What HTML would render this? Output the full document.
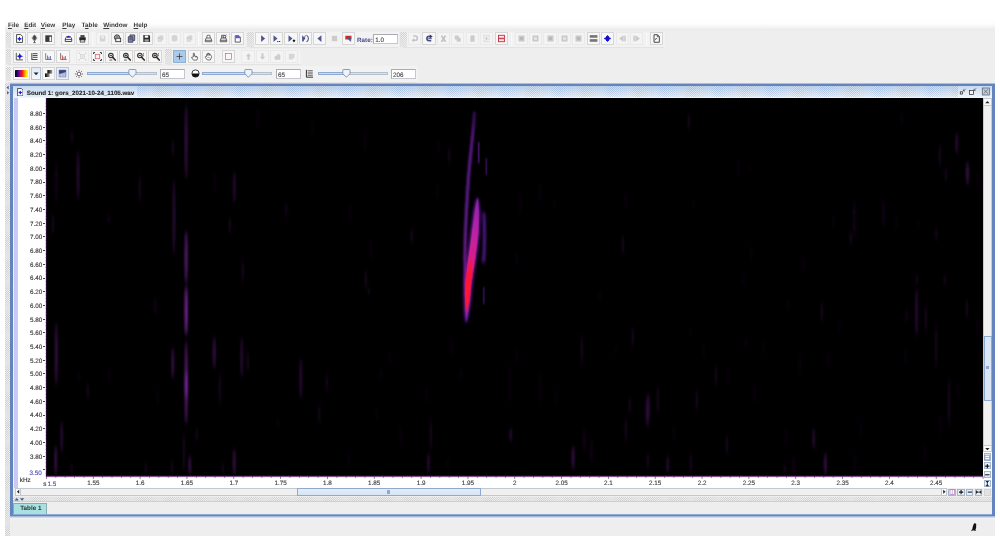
<!DOCTYPE html>
<html><head><meta charset="utf-8"><title>Raven</title>
<style>
html,body{margin:0;padding:0;background:#fff;}
body{width:1000px;height:541px;overflow:hidden;position:relative;font-family:"Liberation Sans",sans-serif;}
#r{position:absolute;left:0;top:0;width:1000px;height:541px;overflow:hidden;will-change:transform;}
#r div,#r span,#r svg{position:absolute;box-sizing:border-box;}
#r span{white-space:nowrap;text-rendering:geometricPrecision;-webkit-text-stroke:0.12px currentColor;}
#r span.bd0{-webkit-text-stroke:0;}
u{text-decoration-thickness:0.5px;text-underline-offset:0.6px;}
.b{background:#f7f7f7;border:0.7px solid #d6d6d6;box-shadow:0 0 0.5px #e2e2e2;}
.bd{background:#f4f4f4;border:0.7px solid #eaeaea;}
.ic{filter:blur(0.28px);}
.tf{background:#fff;border:1px solid #c4c7cc;border-top-color:#a9acb2;border-left-color:#a9acb2;}
</style></head><body><div id="r">

<div style="left:4.60px;top:19.00px;width:990.00px;height:516.60px;background:#eeeeee;"></div>
<div style="left:4.60px;top:19.00px;width:990.00px;height:12.20px;background:linear-gradient(#ffffff 0%,#fdfdfd 40%,#e9e9e9 100%);"></div>
<span class=bd0 style="left:8.00px;top:22.09px;font-size:6.35px;line-height:7.62px;color:#3a3a3a;font-weight:bold;"><u>F</u>ile</span>
<span class=bd0 style="left:24.20px;top:22.09px;font-size:6.35px;line-height:7.62px;color:#3a3a3a;font-weight:bold;"><u>E</u>dit</span>
<span class=bd0 style="left:40.80px;top:22.09px;font-size:6.35px;line-height:7.62px;color:#3a3a3a;font-weight:bold;"><u>V</u>iew</span>
<span class=bd0 style="left:62.30px;top:22.09px;font-size:6.35px;line-height:7.62px;color:#3a3a3a;font-weight:bold;"><u>P</u>lay</span>
<span class=bd0 style="left:81.60px;top:22.09px;font-size:6.35px;line-height:7.62px;color:#3a3a3a;font-weight:bold;">T<u>a</u>ble</span>
<span class=bd0 style="left:103.30px;top:22.09px;font-size:6.35px;line-height:7.62px;color:#3a3a3a;font-weight:bold;"><u>W</u>indow</span>
<span class=bd0 style="left:133.60px;top:22.09px;font-size:6.35px;line-height:7.62px;color:#3a3a3a;font-weight:bold;"><u>H</u>elp</span>
<div style="left:4.60px;top:31.50px;width:241.80px;height:15.30px;background:#f2f2f2;box-shadow:0 0.5px 0.8px #e3e3e3;"></div>
<div style="left:246.80px;top:31.50px;width:152.70px;height:15.30px;background:#f2f2f2;box-shadow:0 0.5px 0.8px #e3e3e3;"></div>
<div style="left:400.00px;top:31.50px;width:265.00px;height:15.30px;background:#f2f2f2;box-shadow:0 0.5px 0.8px #e3e3e3;"></div>
<div style="left:4.60px;top:48.60px;width:158.90px;height:15.60px;background:#f2f2f2;box-shadow:0 0.5px 0.8px #e3e3e3;"></div>
<div style="left:164.00px;top:48.60px;width:136.50px;height:15.60px;background:#f2f2f2;box-shadow:0 0.5px 0.8px #e3e3e3;"></div>
<div style="left:4.60px;top:66.30px;width:413.90px;height:15.30px;background:#f2f2f2;box-shadow:0 0.5px 0.8px #e3e3e3;"></div>
<div style="left:5.70px;top:32.20px;width:5.50px;height:14.40px;background-color:#f0f0f0;background-image:linear-gradient(45deg,rgba(0,0,0,0.13) 25%,transparent 25%,transparent 75%,rgba(0,0,0,0.13) 75%),linear-gradient(45deg,rgba(0,0,0,0.13) 25%,transparent 25%,transparent 75%,rgba(0,0,0,0.13) 75%);background-size:2.08px 2.08px;background-position:0 0,1.04px 1.04px;"></div>
<div style="left:247.00px;top:32.20px;width:7.40px;height:14.40px;background-color:#f0f0f0;background-image:linear-gradient(45deg,rgba(0,0,0,0.13) 25%,transparent 25%,transparent 75%,rgba(0,0,0,0.13) 75%),linear-gradient(45deg,rgba(0,0,0,0.13) 25%,transparent 25%,transparent 75%,rgba(0,0,0,0.13) 75%);background-size:2.08px 2.08px;background-position:0 0,1.04px 1.04px;"></div>
<div style="left:400.20px;top:32.20px;width:6.80px;height:14.40px;background-color:#f0f0f0;background-image:linear-gradient(45deg,rgba(0,0,0,0.13) 25%,transparent 25%,transparent 75%,rgba(0,0,0,0.13) 75%),linear-gradient(45deg,rgba(0,0,0,0.13) 25%,transparent 25%,transparent 75%,rgba(0,0,0,0.13) 75%);background-size:2.08px 2.08px;background-position:0 0,1.04px 1.04px;"></div>
<div style="left:5.70px;top:49.40px;width:5.50px;height:14.60px;background-color:#f0f0f0;background-image:linear-gradient(45deg,rgba(0,0,0,0.13) 25%,transparent 25%,transparent 75%,rgba(0,0,0,0.13) 75%),linear-gradient(45deg,rgba(0,0,0,0.13) 25%,transparent 25%,transparent 75%,rgba(0,0,0,0.13) 75%);background-size:2.08px 2.08px;background-position:0 0,1.04px 1.04px;"></div>
<div style="left:164.60px;top:49.40px;width:7.00px;height:14.60px;background-color:#f0f0f0;background-image:linear-gradient(45deg,rgba(0,0,0,0.13) 25%,transparent 25%,transparent 75%,rgba(0,0,0,0.13) 75%),linear-gradient(45deg,rgba(0,0,0,0.13) 25%,transparent 25%,transparent 75%,rgba(0,0,0,0.13) 75%);background-size:2.08px 2.08px;background-position:0 0,1.04px 1.04px;"></div>
<div style="left:5.70px;top:67.00px;width:5.50px;height:14.20px;background-color:#f0f0f0;background-image:linear-gradient(45deg,rgba(0,0,0,0.13) 25%,transparent 25%,transparent 75%,rgba(0,0,0,0.13) 75%),linear-gradient(45deg,rgba(0,0,0,0.13) 25%,transparent 25%,transparent 75%,rgba(0,0,0,0.13) 75%);background-size:2.08px 2.08px;background-position:0 0,1.04px 1.04px;"></div>
<div class="b" style="left:13.00px;top:32.40px;width:13.20px;height:13.00px;"></div>
<svg class="ic" style="left:13.10px;top:32.40px;width:13px;height:13px" viewBox="-0.6 -0.6 14.2 14.2"><path d="M3.3 2.2 H7.8 L9.8 4.2 V10.8 H3.3Z" fill="#fff" stroke="#2b2b2b" stroke-width="0.9"/><path d="M6.5 4.2 L7.4 6 L9.2 6.9 L7.4 7.8 L6.5 9.6 L5.6 7.8 L3.8 6.9 L5.6 6Z" fill="#1a1ad8"/></svg>
<div class="b" style="left:27.45px;top:32.40px;width:13.20px;height:13.00px;"></div>
<svg class="ic" style="left:27.55px;top:32.40px;width:13px;height:13px" viewBox="-0.6 -0.6 14.2 14.2"><path d="M6.5 2 L9.8 6 L6.5 10 L3.2 6Z" fill="#8a8a8a"/><ellipse cx="6.5" cy="5.6" rx="1.5" ry="2.6" fill="#444"/><path d="M6.5 9 V11 M5.2 11 H7.8" stroke="#444" stroke-width="0.9"/></svg>
<div class="b" style="left:41.90px;top:32.40px;width:13.20px;height:13.00px;"></div>
<svg class="ic" style="left:42.00px;top:32.40px;width:13px;height:13px" viewBox="-0.6 -0.6 14.2 14.2"><rect x="3" y="3" width="7.2" height="7.2" fill="#3a3a3a"/><rect x="7.6" y="4.6" width="1.9" height="5" fill="#fff"/></svg>
<div class="b" style="left:61.40px;top:32.40px;width:13.20px;height:13.00px;"></div>
<svg class="ic" style="left:61.50px;top:32.40px;width:13px;height:13px" viewBox="-0.6 -0.6 14.2 14.2"><path d="M3 7 L4.4 4.4 H8.6 L10 7 V9.8 H3Z" fill="#eee" stroke="#2b2b2b" stroke-width="0.9"/><path d="M3 7.6 H10" stroke="#2b2b2b" stroke-width="0.8"/><path d="M6.5 3.2 L8.3 5.8 H4.7Z" fill="#1a1ad8"/></svg>
<div class="b" style="left:75.90px;top:32.40px;width:13.20px;height:13.00px;"></div>
<svg class="ic" style="left:76.00px;top:32.40px;width:13px;height:13px" viewBox="-0.6 -0.6 14.2 14.2"><rect x="4.2" y="2.8" width="4.6" height="2.6" fill="#444"/><rect x="3" y="5.2" width="7" height="3.2" fill="#222"/><rect x="4" y="8" width="5" height="2.4" fill="#ddd" stroke="#222" stroke-width="0.7"/></svg>
<div class="bd" style="left:96.00px;top:32.40px;width:13.20px;height:13.00px;"></div>
<svg class="ic" style="left:96.10px;top:32.40px;width:13px;height:13px" viewBox="-0.6 -0.6 14.2 14.2"><rect x="3.6" y="3.2" width="6" height="6.6" rx="1" fill="#d4d4d4"/><rect x="5" y="3.8" width="3.2" height="2.6" fill="#ececec"/></svg>
<div class="b" style="left:110.50px;top:32.40px;width:13.20px;height:13.00px;"></div>
<svg class="ic" style="left:110.60px;top:32.40px;width:13px;height:13px" viewBox="-0.6 -0.6 14.2 14.2"><circle cx="6" cy="5.4" r="2.9" fill="#ccc" stroke="#2b2b2b" stroke-width="1"/><rect x="4.6" y="6.2" width="5.4" height="3.8" fill="#eee" stroke="#2b2b2b" stroke-width="0.9"/><path d="M4.4 4.8 H7.6" stroke="#2b2b2b" stroke-width="0.9"/></svg>
<div class="b" style="left:124.90px;top:32.40px;width:13.20px;height:13.00px;"></div>
<svg class="ic" style="left:125.00px;top:32.40px;width:13px;height:13px" viewBox="-0.6 -0.6 14.2 14.2"><path d="M4.8 2.6 H10 V8.6 H4.8Z" fill="#9a9ad8" stroke="#2b2b2b" stroke-width="0.8"/><path d="M3 4.6 H8 V10.6 H3Z" fill="#8484cc" stroke="#2b2b2b" stroke-width="0.8"/><path d="M4 6.2 H7 M4 7.8 H7" stroke="#334" stroke-width="0.6"/></svg>
<div class="b" style="left:139.40px;top:32.40px;width:13.20px;height:13.00px;"></div>
<svg class="ic" style="left:139.50px;top:32.40px;width:13px;height:13px" viewBox="-0.6 -0.6 14.2 14.2"><path d="M3 2.8 H9.4 L10.4 3.8 V10.4 H3Z" fill="#2e2e2e"/><rect x="4.6" y="3.2" width="3.8" height="2.4" fill="#fff"/><rect x="4.4" y="7.4" width="4.6" height="2.6" fill="#fff" opacity=".55"/></svg>
<div class="bd" style="left:153.90px;top:32.40px;width:13.20px;height:13.00px;"></div>
<svg class="ic" style="left:154.00px;top:32.40px;width:13px;height:13px" viewBox="-0.6 -0.6 14.2 14.2"><path d="M5.2 3 H9.6 V8.4 H5.2Z" fill="#d6d6d6"/><path d="M3.4 4.6 H7.8 V10 H3.4Z" fill="#cfcfcf"/><rect x="4.4" y="7" width="2.2" height="2" fill="#e4e4e4"/></svg>
<div class="bd" style="left:168.20px;top:32.40px;width:13.20px;height:13.00px;"></div>
<svg class="ic" style="left:168.30px;top:32.40px;width:13px;height:13px" viewBox="-0.6 -0.6 14.2 14.2"><path d="M3.6 3.4 L6.8 2.8 L9.6 3.8 V8.8 L6.6 10 L3.6 9Z" fill="#d2d2d2"/><path d="M6.7 4.6 V9.8" stroke="#e2e2e2" stroke-width="0.6"/></svg>
<div class="bd" style="left:182.60px;top:32.40px;width:13.20px;height:13.00px;"></div>
<svg class="ic" style="left:182.70px;top:32.40px;width:13px;height:13px" viewBox="-0.6 -0.6 14.2 14.2"><path d="M5.2 3 H9.6 V8.4 H5.2Z" fill="#d6d6d6"/><path d="M3.4 4.6 H7.8 V10 H3.4Z" fill="#cfcfcf"/><rect x="4.4" y="7" width="2.2" height="2" fill="#e4e4e4"/></svg>
<div class="b" style="left:201.90px;top:32.40px;width:13.20px;height:13.00px;"></div>
<svg class="ic" style="left:202.00px;top:32.40px;width:13px;height:13px" viewBox="-0.6 -0.6 14.2 14.2"><path d="M4.6 5.8 L5 3 H8 L8.4 5.8" fill="#fff" stroke="#2b2b2b" stroke-width="0.7"/><path d="M3 8.6 L4 5.9 H9 L10 8.6 V10 H3Z" fill="#f4f4f4" stroke="#2b2b2b" stroke-width="0.75"/><path d="M3 8.5 H10" stroke="#2b2b2b" stroke-width="0.7"/><path d="M3.4 9.6 H9.6" stroke="#8a8a50" stroke-width="0.5"/></svg>
<div class="b" style="left:216.40px;top:32.40px;width:13.20px;height:13.00px;"></div>
<svg class="ic" style="left:216.50px;top:32.40px;width:13px;height:13px" viewBox="-0.6 -0.6 14.2 14.2"><path d="M4.4 5.8 V3 H7.6 V5.8" fill="#ddd" stroke="#2b2b2b" stroke-width="0.7"/><circle cx="7.6" cy="4.6" r="1.5" fill="#eee" stroke="#2b2b2b" stroke-width="0.75"/><path d="M8.4 3.6 L9.8 2.4" stroke="#2b2b2b" stroke-width="0.7"/><path d="M3 8.6 L4 5.9 H9 L10 8.6 V10 H3Z" fill="#e4e4e4" stroke="#2b2b2b" stroke-width="0.75"/><path d="M3 8.5 H10" stroke="#2b2b2b" stroke-width="0.7"/></svg>
<div class="b" style="left:230.90px;top:32.40px;width:13.20px;height:13.00px;"></div>
<svg class="ic" style="left:231.00px;top:32.40px;width:13px;height:13px" viewBox="-0.6 -0.6 14.2 14.2"><path d="M4 3.4 H8 L9.6 5 V10.4 H4Z" fill="#fff" stroke="#2b2b2b" stroke-width="0.8"/><path d="M4.4 3.8 H7.8 L9.2 5.2 V6.2 H4.4Z" fill="#5a5ac8"/></svg>
<div class="b" style="left:255.40px;top:32.40px;width:13.20px;height:13.00px;"></div>
<svg class="ic" style="left:255.50px;top:32.40px;width:13px;height:13px" viewBox="-0.6 -0.6 14.2 14.2"><path d="M5 2.9 L9.4 6.6 L5 10.3Z" fill="#50548f"/></svg>
<div class="b" style="left:269.90px;top:32.40px;width:13.20px;height:13.00px;"></div>
<svg class="ic" style="left:270.00px;top:32.40px;width:13px;height:13px" viewBox="-0.6 -0.6 14.2 14.2"><path d="M3.2 2.9 L7.6 6.6 L3.2 10.3Z" fill="#50548f"/><path d="M7.2 9.8 H8.6 M9.2 9.8 H10.6" stroke="#222" stroke-width="1"/></svg>
<div class="b" style="left:284.40px;top:32.40px;width:13.20px;height:13.00px;"></div>
<svg class="ic" style="left:284.50px;top:32.40px;width:13px;height:13px" viewBox="-0.6 -0.6 14.2 14.2"><path d="M3.2 2.9 L7.6 6.6 L3.2 10.3Z" fill="#50548f"/><path d="M9.2 7.3 L10.8 8.9 L9.2 10.5 L7.6 8.9Z" fill="#111"/></svg>
<div class="b" style="left:298.80px;top:32.40px;width:13.20px;height:13.00px;"></div>
<svg class="ic" style="left:298.90px;top:32.40px;width:13px;height:13px" viewBox="-0.6 -0.6 14.2 14.2"><path d="M2.8 3 L6.4 6.5 L2.8 10Z" fill="#50548f"/><path d="M6.4 3 L3.8 10" stroke="#50548f" stroke-width="0.9"/><path d="M7.6 2.8 C10.4 4.6 10.4 8.4 7.6 10.2" fill="none" stroke="#50548f" stroke-width="1.2"/></svg>
<div class="b" style="left:313.30px;top:32.40px;width:13.20px;height:13.00px;"></div>
<svg class="ic" style="left:313.40px;top:32.40px;width:13px;height:13px" viewBox="-0.6 -0.6 14.2 14.2"><path d="M8.6 2.9 L4.2 6.6 L8.6 10.3Z" fill="#50548f"/></svg>
<svg class="ic" style="left:328.10px;top:32.40px;width:13px;height:13px" viewBox="-0.6 -0.6 14.2 14.2"><rect x="3.6" y="3.6" width="5.8" height="5.8" fill="#cbcbcb"/></svg>
<div class="b" style="left:342.20px;top:32.40px;width:13.20px;height:13.00px;"></div>
<svg class="ic" style="left:342.30px;top:32.40px;width:13px;height:13px" viewBox="-0.6 -0.6 14.2 14.2"><path d="M3 3.6 H9.8 V7.6 H8.2 L8.6 10 L6.4 7.6 H3Z" fill="#c83030"/><rect x="5.4" y="4.8" width="3.6" height="2.4" fill="#50548f"/><path d="M8.6 7 L9 9.8" stroke="#50548f" stroke-width="0.9"/></svg>
<div class="bd" style="left:408.00px;top:32.40px;width:13.20px;height:13.00px;"></div>
<svg class="ic" style="left:408.10px;top:32.40px;width:13px;height:13px" viewBox="-0.6 -0.6 14.2 14.2"><path d="M5 3.8 H7.2 C10.4 3.8 10.4 8.4 7.2 8.4 H6" fill="none" stroke="#c4c4c4" stroke-width="1.7"/><path d="M6.2 6.2 L3.2 8.4 L6.2 10.6Z" fill="#c4c4c4"/></svg>
<div class="b" style="left:422.40px;top:32.40px;width:13.20px;height:13.00px;"></div>
<svg class="ic" style="left:422.50px;top:32.40px;width:13px;height:13px" viewBox="-0.6 -0.6 14.2 14.2"><path d="M8.4 9 H6.2 C2.8 9 2.8 4.2 6.2 4.2 H7" fill="none" stroke="#4a4e80" stroke-width="1.8"/><path d="M6.8 2.2 L10 4.3 L6.8 6.4Z" fill="#33365e"/><path d="M5.2 6.7 H9" stroke="#4a4e80" stroke-width="1.1"/></svg>
<div class="bd" style="left:436.80px;top:32.40px;width:13.20px;height:13.00px;"></div>
<svg class="ic" style="left:436.90px;top:32.40px;width:13px;height:13px" viewBox="-0.6 -0.6 14.2 14.2"><path d="M4.7 4 L8.3 9.4 M8.3 4 L4.7 9.4" stroke="#c2c2c2" stroke-width="1.9" stroke-linecap="round"/></svg>
<div class="bd" style="left:451.20px;top:32.40px;width:13.20px;height:13.00px;"></div>
<svg class="ic" style="left:451.30px;top:32.40px;width:13px;height:13px" viewBox="-0.6 -0.6 14.2 14.2"><path d="M3.6 3.2 H7 L8 4.2 V7.6 H3.6Z M5.6 5.4 H9 L10 6.4 V10 H5.6Z" fill="#cbcbcb"/></svg>
<div class="bd" style="left:465.60px;top:32.40px;width:13.20px;height:13.00px;"></div>
<svg class="ic" style="left:465.70px;top:32.40px;width:13px;height:13px" viewBox="-0.6 -0.6 14.2 14.2"><path d="M4.2 4.4 C4.2 2.6 8.8 2.6 8.8 4.4 V10 H4.2Z" fill="#cbcbcb"/></svg>
<div class="bd" style="left:480.00px;top:32.40px;width:13.20px;height:13.00px;"></div>
<svg class="ic" style="left:480.10px;top:32.40px;width:13px;height:13px" viewBox="-0.6 -0.6 14.2 14.2"><rect x="3.6" y="3" width="5.8" height="7" fill="none" stroke="#cbcbcb" stroke-width="1" stroke-dasharray="1.4 1"/><rect x="5.6" y="4.6" width="1.8" height="3.8" fill="#cbcbcb"/></svg>
<div class="b" style="left:494.50px;top:32.40px;width:13.20px;height:13.00px;"></div>
<svg class="ic" style="left:494.60px;top:32.40px;width:13px;height:13px" viewBox="-0.6 -0.6 14.2 14.2"><rect x="3.2" y="3" width="6.6" height="3.2" fill="#fbe4e6" stroke="#c42838" stroke-width="0.95"/><rect x="3.2" y="6.8" width="6.6" height="3.2" fill="#fbe4e6" stroke="#c42838" stroke-width="0.95"/></svg>
<div class="bd" style="left:514.50px;top:32.40px;width:13.20px;height:13.00px;"></div>
<svg class="ic" style="left:514.60px;top:32.40px;width:13px;height:13px" viewBox="-0.6 -0.6 14.2 14.2"><rect x="3.2" y="3.2" width="6.6" height="6.6" fill="#c9c9c9"/><rect x="5.2" y="5.2" width="2.6" height="2.6" fill="#b0b0b0"/></svg>
<div class="bd" style="left:529.00px;top:32.40px;width:13.20px;height:13.00px;"></div>
<svg class="ic" style="left:529.10px;top:32.40px;width:13px;height:13px" viewBox="-0.6 -0.6 14.2 14.2"><rect x="3.2" y="3.2" width="6.6" height="6.6" fill="#c9c9c9"/><rect x="5" y="5" width="3" height="3" fill="#e6e6e6"/></svg>
<div class="bd" style="left:543.40px;top:32.40px;width:13.20px;height:13.00px;"></div>
<svg class="ic" style="left:543.50px;top:32.40px;width:13px;height:13px" viewBox="-0.6 -0.6 14.2 14.2"><rect x="3.2" y="3.2" width="6.6" height="6.6" fill="#c9c9c9"/><rect x="5.2" y="5.2" width="2.6" height="2.6" fill="#b0b0b0"/></svg>
<div class="bd" style="left:557.80px;top:32.40px;width:13.20px;height:13.00px;"></div>
<svg class="ic" style="left:557.90px;top:32.40px;width:13px;height:13px" viewBox="-0.6 -0.6 14.2 14.2"><rect x="3.2" y="3.2" width="6.6" height="6.6" fill="#c9c9c9"/><rect x="5" y="5" width="3" height="3" fill="#e6e6e6"/></svg>
<div class="bd" style="left:572.20px;top:32.40px;width:13.20px;height:13.00px;"></div>
<svg class="ic" style="left:572.30px;top:32.40px;width:13px;height:13px" viewBox="-0.6 -0.6 14.2 14.2"><rect x="3.2" y="3.2" width="6.6" height="6.6" fill="#c9c9c9"/><rect x="5.2" y="5.2" width="2.6" height="2.6" fill="#b0b0b0"/></svg>
<div class="b" style="left:586.60px;top:32.40px;width:13.20px;height:13.00px;"></div>
<svg class="ic" style="left:586.70px;top:32.40px;width:13px;height:13px" viewBox="-0.6 -0.6 14.2 14.2"><rect x="2.4" y="2.8" width="8.4" height="2.9" fill="#777"/><rect x="2.4" y="7.2" width="8.4" height="2.9" fill="#777"/></svg>
<div class="b" style="left:601.00px;top:32.40px;width:13.20px;height:13.00px;"></div>
<svg class="ic" style="left:601.10px;top:32.40px;width:13px;height:13px" viewBox="-0.6 -0.6 14.2 14.2"><path d="M6.5 2.6 L8 4.6 L8 5.4 L10.6 6.5 L8 7.6 L8 8.4 L6.5 10.4 L5 8.4 L5 7.6 L2.4 6.5 L5 5.4 L5 4.6Z" fill="#1010cc"/><rect x="3.4" y="5.5" width="6.2" height="2" fill="#1010cc"/><rect x="5" y="3.8" width="3" height="5.4" fill="#1010cc"/></svg>
<div class="bd" style="left:615.50px;top:32.40px;width:13.20px;height:13.00px;"></div>
<svg class="ic" style="left:615.60px;top:32.40px;width:13px;height:13px" viewBox="-0.6 -0.6 14.2 14.2"><path d="M7.4 3 V10 L2.8 6.5Z" fill="#cbcbcb"/><rect x="7.4" y="3.4" width="2.8" height="6.2" fill="#d2d2d2"/></svg>
<div class="bd" style="left:630.00px;top:32.40px;width:13.20px;height:13.00px;"></div>
<svg class="ic" style="left:630.10px;top:32.40px;width:13px;height:13px" viewBox="-0.6 -0.6 14.2 14.2"><path d="M5.6 3 V10 L10.2 6.5Z" fill="#cbcbcb"/><rect x="2.8" y="3.4" width="2.8" height="6.2" fill="#d2d2d2"/></svg>
<div class="b" style="left:649.80px;top:32.40px;width:13.20px;height:13.00px;"></div>
<svg class="ic" style="left:649.90px;top:32.40px;width:13px;height:13px" viewBox="-0.6 -0.6 14.2 14.2"><path d="M3.8 2.4 H7.6 L9.6 4.4 V10.6 H3.8Z" fill="#fff" stroke="#2b2b2b" stroke-width="0.95"/><path d="M7.4 2.6 V4.6 H9.4" fill="none" stroke="#2b2b2b" stroke-width="0.8"/><path d="M5 8.4 L6.2 6 L7.2 7.4" fill="none" stroke="#2b2b2b" stroke-width="0.7"/></svg>
<div style="left:56.60px;top:32.60px;width:2.80px;height:13.20px;background:linear-gradient(90deg,#e8e8e8,#fafafa 50%,#f0f0f0);"></div>
<div style="left:91.20px;top:32.60px;width:2.80px;height:13.20px;background:linear-gradient(90deg,#e8e8e8,#fafafa 50%,#f0f0f0);"></div>
<div style="left:197.20px;top:32.60px;width:2.80px;height:13.20px;background:linear-gradient(90deg,#e8e8e8,#fafafa 50%,#f0f0f0);"></div>
<div style="left:510.20px;top:32.60px;width:2.80px;height:13.20px;background:linear-gradient(90deg,#e8e8e8,#fafafa 50%,#f0f0f0);"></div>
<div style="left:645.40px;top:32.60px;width:2.80px;height:13.20px;background:linear-gradient(90deg,#e8e8e8,#fafafa 50%,#f0f0f0);"></div>
<span class=bd0 style="left:357.00px;top:36.62px;font-size:6.3px;line-height:7.56px;color:#4a4e8e;font-weight:bold;">Rate:</span>
<div class="tf" style="left:373.4px;top:34.2px;width:24.2px;height:9.6px"></div>
<span style="left:375.20px;top:36.62px;font-size:6.3px;line-height:7.56px;color:#444;">1.0</span>
<div class="b" style="left:13.00px;top:49.60px;width:13.20px;height:13.40px;"></div>
<svg class="ic" style="left:13.10px;top:49.80px;width:13px;height:13px" viewBox="-0.6 -0.6 14.2 14.2"><path d="M3 2.6 V10.2 H10.2" fill="none" stroke="#333" stroke-width="0.9"/><path d="M6.8 2.6 L7.9 5.2 L10.5 6.3 L7.9 7.4 L6.8 10 L5.7 7.4 L3.6 6.3 L5.7 5.2Z" fill="#1a1ad8"/></svg>
<div class="b" style="left:27.45px;top:49.60px;width:13.20px;height:13.40px;"></div>
<svg class="ic" style="left:27.55px;top:49.80px;width:13px;height:13px" viewBox="-0.6 -0.6 14.2 14.2"><path d="M3.6 2.8 V10.2" stroke="#333" stroke-width="1"/><path d="M4.6 3.4 H9.8 M4.6 5.4 H9.8 M4.6 7.4 H9.8 M3.6 9.8 H9.8" stroke="#333" stroke-width="0.95"/></svg>
<div class="b" style="left:41.90px;top:49.60px;width:13.20px;height:13.40px;"></div>
<svg class="ic" style="left:42.00px;top:49.80px;width:13px;height:13px" viewBox="-0.6 -0.6 14.2 14.2"><path d="M3.4 2.8 V9.8 H10 M5.4 9.8 V5.4 M7 9.8 V6.8 M8.6 9.8 V6" fill="none" stroke="#5a64a8" stroke-width="0.9"/></svg>
<div class="b" style="left:56.40px;top:49.60px;width:13.20px;height:13.40px;"></div>
<svg class="ic" style="left:56.50px;top:49.80px;width:13px;height:13px" viewBox="-0.6 -0.6 14.2 14.2"><path d="M3.4 2.8 V9.8" fill="none" stroke="#555" stroke-width="0.9"/><path d="M3.4 9.8 H10 M5.4 9.8 V5.4 M7 9.8 V6.8 M8.6 9.8 V6" fill="none" stroke="#c8423a" stroke-width="0.9"/></svg>
<div class="bd" style="left:76.00px;top:49.60px;width:13.20px;height:13.40px;"></div>
<svg class="ic" style="left:76.10px;top:49.80px;width:13px;height:13px" viewBox="-0.6 -0.6 14.2 14.2"><rect x="4.3" y="4.3" width="4.4" height="4.4" fill="#e6e6e6" stroke="#d2d2d2" stroke-width="0.7"/><path d="M2.6 3.6 V2.6 H3.6 M9.4 2.6 H10.4 V3.6 M2.6 9.4 V10.4 H3.6 M9.4 10.4 H10.4 V9.4" fill="none" stroke="#c8c8c8" stroke-width="0.9"/></svg>
<div class="b" style="left:90.50px;top:49.60px;width:13.20px;height:13.40px;"></div>
<svg class="ic" style="left:90.60px;top:49.80px;width:13px;height:13px" viewBox="-0.6 -0.6 14.2 14.2"><rect x="4.1" y="4.1" width="4.8" height="4.8" fill="#fdf0f0" stroke="#dc5a66" stroke-width="0.8"/><path d="M2.2 3.8 V2.2 H3.8 M9.2 2.2 H10.8 V3.8 M2.2 9.2 V10.8 H3.8 M9.2 10.8 H10.8 V9.2" fill="none" stroke="#222" stroke-width="1"/></svg>
<div class="b" style="left:104.90px;top:49.60px;width:13.20px;height:13.40px;"></div>
<svg class="ic" style="left:105.00px;top:49.80px;width:13px;height:13px" viewBox="-0.6 -0.6 14.2 14.2"><circle cx="5.8" cy="5.4" r="2.5" fill="#ddd" stroke="#2b2b2b" stroke-width="1.1"/><path d="M7.6 7.2 L10.6 10.4" stroke="#3a2a20" stroke-width="1.7" stroke-linecap="round"/><path d="M4.6 5.4 H7" stroke="#2b2b2b" stroke-width="0.9"/><path d="M4.2 10.4 H7.4" stroke="#2b2b2b" stroke-width="0.8"/></svg>
<div class="b" style="left:119.40px;top:49.60px;width:13.20px;height:13.40px;"></div>
<svg class="ic" style="left:119.50px;top:49.80px;width:13px;height:13px" viewBox="-0.6 -0.6 14.2 14.2"><circle cx="5.8" cy="5.4" r="2.5" fill="#ddd" stroke="#2b2b2b" stroke-width="1.1"/><path d="M7.6 7.2 L10.6 10.4" stroke="#3a2a20" stroke-width="1.7" stroke-linecap="round"/><path d="M4.6 5.4 H7" stroke="#2b2b2b" stroke-width="0.9"/><path d="M3.8 10.4 H7" stroke="#2b2b2b" stroke-width="0.8"/><path d="M5.8 4.2 V6.6" stroke="#2b2b2b" stroke-width="0.9"/></svg>
<div class="b" style="left:133.90px;top:49.60px;width:13.20px;height:13.40px;"></div>
<svg class="ic" style="left:134.00px;top:49.80px;width:13px;height:13px" viewBox="-0.6 -0.6 14.2 14.2"><circle cx="5.8" cy="5.4" r="2.5" fill="#ddd" stroke="#2b2b2b" stroke-width="1.1"/><path d="M7.6 7.2 L10.6 10.4" stroke="#3a2a20" stroke-width="1.7" stroke-linecap="round"/><path d="M4.6 5.4 H7" stroke="#2b2b2b" stroke-width="0.9"/><path d="M9.8 3 V6.4" stroke="#2b2b2b" stroke-width="0.9" stroke-dasharray="1 .6"/></svg>
<div class="b" style="left:148.40px;top:49.60px;width:13.20px;height:13.40px;"></div>
<svg class="ic" style="left:148.50px;top:49.80px;width:13px;height:13px" viewBox="-0.6 -0.6 14.2 14.2"><circle cx="5.8" cy="5.4" r="2.5" fill="#ddd" stroke="#2b2b2b" stroke-width="1.1"/><path d="M7.6 7.2 L10.6 10.4" stroke="#3a2a20" stroke-width="1.7" stroke-linecap="round"/><path d="M4.6 5.4 H7" stroke="#2b2b2b" stroke-width="0.9"/><path d="M9.8 3 V6.4" stroke="#2b2b2b" stroke-width="0.9" stroke-dasharray="1 .6"/><path d="M5.8 4.2 V6.6" stroke="#2b2b2b" stroke-width="0.9"/></svg>
<div class="b" style="left:173.00px;top:49.60px;width:13.20px;height:13.40px;background:#a9cbe9;border-color:#8fb0d0;"></div>
<svg class="ic" style="left:173.10px;top:49.80px;width:13px;height:13px" viewBox="-0.6 -0.6 14.2 14.2"><path d="M6.5 3.2 V9.8 M3.2 6.5 H9.8" stroke="#333" stroke-width="0.8"/></svg>
<div class="b" style="left:187.60px;top:49.60px;width:13.20px;height:13.40px;"></div>
<svg class="ic" style="left:187.70px;top:49.80px;width:13px;height:13px" viewBox="-0.6 -0.6 14.2 14.2"><path d="M5.2 7.2 V3.4 C5.2 2.6 6.4 2.6 6.4 3.4 V6 L9.4 6.6 C10 6.8 10 7.4 9.8 8.2 L9.2 10.4 H5.4 L3.4 7.8 C3 7.2 3.8 6.6 4.4 7.2Z" fill="#fff" stroke="#222" stroke-width="0.7"/><path d="M7.4 6.4 V7.6 M8.4 6.6 V7.8" stroke="#222" stroke-width="0.5"/></svg>
<div class="b" style="left:202.10px;top:49.60px;width:13.20px;height:13.40px;"></div>
<svg class="ic" style="left:202.20px;top:49.80px;width:13px;height:13px" viewBox="-0.6 -0.6 14.2 14.2"><path d="M4.5 6.4 V4.2 C4.5 3.4 5.5 3.4 5.5 4.2 V3.4 C5.5 2.6 6.6 2.6 6.6 3.4 V3.8 C6.6 3 7.7 3 7.7 3.8 V4.6 C7.7 3.9 8.8 3.9 8.8 4.8 L9.9 6.4 L9.4 8.4 L8.4 10.3 H5.2 L3 7.4 C2.6 6.6 3.6 6 4.5 6.4Z" fill="#fff" stroke="#222" stroke-width="0.7"/><path d="M5.5 4.2 V5.8 M6.6 3.8 V5.6 M7.7 4.6 V5.8 M5.2 7.8 C6.2 7 7.6 7.2 7.8 8.4" fill="none" stroke="#222" stroke-width="0.5"/></svg>
<div class="b" style="left:221.60px;top:49.60px;width:13.20px;height:13.40px;"></div>
<svg class="ic" style="left:221.70px;top:49.80px;width:13px;height:13px" viewBox="-0.6 -0.6 14.2 14.2"><rect x="3.3" y="3.3" width="6.4" height="6.4" fill="#fdf4f4" stroke="#dc4a50" stroke-width="0.65"/></svg>
<div class="bd" style="left:241.40px;top:49.60px;width:13.20px;height:13.40px;"></div>
<svg class="ic" style="left:241.50px;top:49.80px;width:13px;height:13px" viewBox="-0.6 -0.6 14.2 14.2"><path d="M6.5 3 L9.4 6.2 H7.6 V10 H5.4 V6.2 H3.6Z" fill="#cbcbcb"/></svg>
<div class="bd" style="left:255.90px;top:49.60px;width:13.20px;height:13.40px;"></div>
<svg class="ic" style="left:256.00px;top:49.80px;width:13px;height:13px" viewBox="-0.6 -0.6 14.2 14.2"><path d="M6.5 10 L9.4 6.8 H7.6 V3 H5.4 V6.8 H3.6Z" fill="#cbcbcb"/></svg>
<div class="bd" style="left:270.40px;top:49.60px;width:13.20px;height:13.40px;"></div>
<svg class="ic" style="left:270.50px;top:49.80px;width:13px;height:13px" viewBox="-0.6 -0.6 14.2 14.2"><path d="M3.4 10 V6.6 L6.2 5 L7 3 L9.6 5 V10Z" fill="#cdcdcd"/></svg>
<div class="bd" style="left:284.90px;top:49.60px;width:13.20px;height:13.40px;"></div>
<svg class="ic" style="left:285.00px;top:49.80px;width:13px;height:13px" viewBox="-0.6 -0.6 14.2 14.2"><path d="M3.6 3.4 H9.8 V7.4 L7.6 9.8 H3.6Z" fill="#d6d6d6"/></svg>
<div class="b" style="left:13px;top:67.3px;width:17.4px;height:13px"></div>
<div style="left:15.30px;top:70.30px;width:12.50px;height:7.00px;filter:blur(0.3px);background:linear-gradient(90deg,#000 0%,#1a0640 12%,#5a0a8a 28%,#c01060 45%,#ff2010 58%,#ff9000 72%,#ffe400 88%,#fff040 100%);border-radius:0.6px;"></div>
<div class="b" style="left:30.6px;top:67.3px;width:10.2px;height:13px;background:linear-gradient(#dfeaf6,#f4f8fc);border-color:#b0c4dc"></div>
<svg style="left:30.6px;top:67.3px;width:10.2px;height:13px" viewBox="0 0 10.2 13"><path d="M2.6 5.6 H7.6 L5.1 8.2Z" fill="#222"/></svg>
<div class="b" style="left:41.6px;top:67.3px;width:13px;height:13px"></div>
<svg style="left:41.6px;top:67.3px;width:13px;height:13px" viewBox="0 0 13 13"><defs><linearGradient id="gk" x1="0" x2="1"><stop offset="0" stop-color="#000"/><stop offset="1" stop-color="#999"/></linearGradient></defs><rect x="3" y="6.4" width="4.6" height="3.6" fill="url(#gk)"/><rect x="5.4" y="3" width="4.8" height="3.6" fill="url(#gk)"/></svg>
<div class="b" style="left:55.7px;top:67.3px;width:13px;height:13px;background:#eaf0f7;border-color:#b7c6d8"></div>
<svg style="left:55.7px;top:67.3px;width:13px;height:13px" viewBox="0 0 13 13"><rect x="3" y="3" width="7" height="7" fill="#aab2d6"/><path d="M3 3 H10 V5 L3 7Z" fill="#3c4270"/><path d="M3.4 9.4 H9.6 M3.4 8 H9.6" stroke="#e8ecf8" stroke-width="0.7" stroke-dasharray="0.9 0.7"/><rect x="3" y="3" width="7" height="7" fill="none" stroke="#6a72a8" stroke-width="0.5"/></svg>
<svg style="left:74.4px;top:68.89999999999999px;width:10px;height:10px" viewBox="0 0 10 10"><circle cx="5" cy="5" r="1.8" fill="#fff" stroke="#222" stroke-width="0.65"/><path d="M5 0.9 V2.4 M5 7.6 V9.1 M0.9 5 H2.4 M7.6 5 H9.1 M2.1 2.1 L3.1 3.1 M6.9 6.9 L7.9 7.9 M7.9 2.1 L6.9 3.1 M2.1 7.9 L3.1 6.9" stroke="#222" stroke-width="0.6"/></svg>
<div style="left:86.60px;top:72.30px;width:70.00px;height:3.20px;background:#dde1e7;border:0.6px solid #b4c0d0;border-radius:0.5px;"></div>
<div style="left:86.60px;top:72.30px;width:45.70px;height:3.20px;background:#c9dbf0;border:0.6px solid #8eaad2;border-radius:0.5px;"></div>
<svg style="left:127.90px;top:69.2px;width:8.8px;height:9px" viewBox="0 0 8.8 9"><path d="M0.8 1.2 Q0.8 0.5 1.5 0.5 H7.3 Q8 0.5 8 1.2 V4.6 L4.4 8.3 L0.8 4.6Z" fill="#eef4fb" stroke="#6f86a8" stroke-width="0.8"/></svg>
<div class="tf" style="left:160.4px;top:68.8px;width:24.4px;height:10.4px"></div>
<span style="left:162.00px;top:72.12px;font-size:6.3px;line-height:7.56px;color:#444;">65</span>
<svg style="left:190.6px;top:69.3px;width:9px;height:9px" viewBox="0 0 9 9"><circle cx="4.5" cy="4.5" r="3.6" fill="#fff" stroke="#111" stroke-width="0.8"/><path d="M0.9 4.5 A3.6 3.6 0 0 0 8.1 4.5Z" fill="#111"/></svg>
<div style="left:202.20px;top:72.30px;width:70.00px;height:3.20px;background:#dde1e7;border:0.6px solid #b4c0d0;border-radius:0.5px;"></div>
<div style="left:202.20px;top:72.30px;width:46.10px;height:3.20px;background:#c9dbf0;border:0.6px solid #8eaad2;border-radius:0.5px;"></div>
<svg style="left:243.90px;top:69.2px;width:8.8px;height:9px" viewBox="0 0 8.8 9"><path d="M0.8 1.2 Q0.8 0.5 1.5 0.5 H7.3 Q8 0.5 8 1.2 V4.6 L4.4 8.3 L0.8 4.6Z" fill="#eef4fb" stroke="#6f86a8" stroke-width="0.8"/></svg>
<div class="tf" style="left:276.4px;top:68.8px;width:24.2px;height:10.4px"></div>
<span style="left:278.00px;top:72.12px;font-size:6.3px;line-height:7.56px;color:#444;">65</span>
<svg style="left:305.4px;top:69.3px;width:9px;height:9px" viewBox="0 0 9 9"><path d="M1.4 0.8 V8.2 H8" fill="none" stroke="#333" stroke-width="1"/><path d="M2.6 1.6 H7.8 M2.6 3.2 H7.8 M2.6 4.8 H7.8 M2.6 6.4 H7.8" stroke="#555" stroke-width="0.8"/></svg>
<div style="left:318.20px;top:72.30px;width:69.80px;height:3.20px;background:#dde1e7;border:0.6px solid #b4c0d0;border-radius:0.5px;"></div>
<div style="left:318.20px;top:72.30px;width:28.10px;height:3.20px;background:#c9dbf0;border:0.6px solid #8eaad2;border-radius:0.5px;"></div>
<svg style="left:341.90px;top:69.2px;width:8.8px;height:9px" viewBox="0 0 8.8 9"><path d="M0.8 1.2 Q0.8 0.5 1.5 0.5 H7.3 Q8 0.5 8 1.2 V4.6 L4.4 8.3 L0.8 4.6Z" fill="#eef4fb" stroke="#6f86a8" stroke-width="0.8"/></svg>
<div class="tf" style="left:391.4px;top:68.8px;width:24.4px;height:10.4px"></div>
<span style="left:393.00px;top:72.12px;font-size:6.3px;line-height:7.56px;color:#444;">206</span>
<div style="left:4.60px;top:82.50px;width:5.60px;height:453.10px;background:#eeeeee;background-color:#f0f0f0;background-image:linear-gradient(45deg,rgba(0,0,0,0.13) 25%,transparent 25%,transparent 75%,rgba(0,0,0,0.13) 75%),linear-gradient(45deg,rgba(0,0,0,0.13) 25%,transparent 25%,transparent 75%,rgba(0,0,0,0.13) 75%);background-size:2.08px 2.08px;background-position:0 0,1.04px 1.04px;"></div>
<svg style="left:4.6px;top:84px;width:6px;height:12px" viewBox="0 0 6 12"><path d="M3.7 1.8 L1.4 3.6 L3.7 5.4Z M2 7 L4.3 8.8 L2 10.6Z" fill="#4f6796"/></svg>
<div style="left:10.20px;top:516.60px;width:984.60px;height:2.60px;background:linear-gradient(#a9bfe2,#e6ecf8 45%,#f4f5f8 70%,#eeeeee);"></div>
<div style="left:10.20px;top:82.70px;width:984.60px;height:434.30px;background:#6484bd;border-top:0.6px solid #a8bfe0;border-bottom:0.5px solid #a9bcdc;"></div>
<div style="left:12.70px;top:85.70px;width:979.40px;height:428.90px;background:#eeeeee;"></div>
<div style="left:12.70px;top:513.20px;width:979.40px;height:1.70px;background:linear-gradient(#c4d8ee,#7f9ccc);"></div>
<div style="left:12.50px;top:85.70px;width:0.70px;height:427.50px;background:#dfe9f5;"></div>
<div style="left:991.30px;top:85.70px;width:0.90px;height:427.50px;background:#eaf1f9;"></div>
<div style="left:12.70px;top:512.40px;width:979.40px;height:0.90px;background:#f6f9fc;"></div>
<div style="left:12.50px;top:85.60px;width:979.50px;height:12.60px;background:linear-gradient(#c6d9ef 0%,#dce8f5 50%,#f2f6fb 100%);"></div>
<div style="left:137.00px;top:86.40px;width:821.00px;height:11.00px;background-image:linear-gradient(45deg,rgba(130,160,205,0.22) 25%,transparent 25%,transparent 75%,rgba(120,150,200,0.42) 75%),linear-gradient(45deg,rgba(120,150,200,0.42) 25%,transparent 25%,transparent 75%,rgba(120,150,200,0.42) 75%);background-size:2.08px 2.08px;background-position:0 0,1.04px 1.04px;"></div>
<div style="left:12.50px;top:97.60px;width:979.50px;height:0.80px;background:#a9bfd8;"></div>
<span class=bd0 style="left:25.60px;top:89.57px;font-size:6.22px;line-height:7.46px;color:#262626;font-weight:bold;-webkit-text-stroke:0.1px #262626;background:linear-gradient(#cfe0f2,#e6eff8);padding:0 1.2px;">Sound 1: gors_2021-10-24_1105.wav</span>
<svg style="left:16.6px;top:87.6px;width:6.6px;height:8.4px" viewBox="0 0 7 9"><path d="M0.6 0.5 H4.6 L6.4 2.3 V8.5 H0.6Z" fill="#fff" stroke="#222" stroke-width="0.8"/><path d="M3.5 2.6 L4.3 4.1 L5.8 4.9 L4.3 5.7 L3.5 7.2 L2.7 5.7 L1.2 4.9 L2.7 4.1Z" fill="#1a1ad8"/></svg>
<svg class="ic" style="left:955px;top:86px;width:38px;height:12px" viewBox="0 0 38 12"><g fill="none" stroke="#333" stroke-width="0.8"><rect x="5.3" y="5.8" width="2.2" height="2.2" fill="#f4f8fc"/><path d="M8.4 5 L10.6 2.8 M8.4 3.4 V5 H10" stroke-width="0.6"/><rect x="14.4" y="4.4" width="4" height="4.2" fill="#eef4fa" stroke-width="0.75"/><path d="M19 4.4 L21.2 2.2 M19 2.8 V4.4 H20.6" stroke-width="0.6"/></g><rect x="27.3" y="2" width="7" height="7" fill="#c9d2de" stroke="#55657e" stroke-width="0.8"/><path d="M28.6 3.3 L33 7.7 M33 3.3 L28.6 7.7" stroke="#444" stroke-width="0.65"/></svg>
<div style="left:12.50px;top:98.40px;width:979.50px;height:398.00px;background:#fff;"></div>
<div style="left:12.50px;top:98.40px;width:1.70px;height:389.40px;background:#eef0fa;"></div>
<div style="left:14.20px;top:98.40px;width:4.10px;height:389.40px;background:#c9c9f8;"></div>
<div style="left:46.30px;top:98.40px;width:936.90px;height:377.60px;background:#000;"></div>
<svg style="left:46.3px;top:98.4px;width:936.90px;height:377.60px;overflow:hidden" preserveAspectRatio="none" viewBox="46.3 98.4 936.90 377.60"><defs><filter id="fb" filterUnits="userSpaceOnUse" x="40" y="90" width="960" height="400"><feGaussianBlur stdDeviation="0.8 2.6"/></filter><filter id="fc" filterUnits="userSpaceOnUse" x="40" y="90" width="960" height="400"><feGaussianBlur stdDeviation="0.9 2.0"/></filter><filter id="fd" filterUnits="userSpaceOnUse" x="40" y="90" width="960" height="400"><feGaussianBlur stdDeviation="0.5 1.2"/></filter><linearGradient id="ga" x1="0" y1="200" x2="0" y2="322" gradientUnits="userSpaceOnUse"><stop offset="0" stop-color="#8a22a8"/><stop offset="0.2" stop-color="#b022a8"/><stop offset="0.45" stop-color="#d61f90"/><stop offset="0.62" stop-color="#f01858"/><stop offset="0.8" stop-color="#e0187a"/><stop offset="0.92" stop-color="#8a22b0"/><stop offset="1" stop-color="#5a1a90"/></linearGradient><linearGradient id="gb" x1="0" y1="112" x2="0" y2="290" gradientUnits="userSpaceOnUse"><stop offset="0" stop-color="#3a1060"/><stop offset="0.15" stop-color="#6a1fa0"/><stop offset="0.6" stop-color="#7222a8"/><stop offset="1" stop-color="#8a22a8"/></linearGradient><filter id="fe" filterUnits="userSpaceOnUse" x="40" y="90" width="960" height="400"><feGaussianBlur stdDeviation="0.7 1.0"/></filter><filter id="ff" filterUnits="userSpaceOnUse" x="40" y="90" width="960" height="400"><feGaussianBlur stdDeviation="1.4 1.9"/></filter><filter id="fg" filterUnits="userSpaceOnUse" x="40" y="90" width="960" height="400"><feGaussianBlur stdDeviation="0.9 1.2"/></filter></defs><g filter="url(#fb)"><ellipse cx="186.4" cy="142.0" rx="1.2" ry="37.0" fill="#8a2cb0" opacity="0.45"/><ellipse cx="186.4" cy="257.5" rx="1.5" ry="26.5" fill="#8a2cb0" opacity="0.6"/><ellipse cx="174.2" cy="217.5" rx="1.2" ry="38.5" fill="#8a2cb0" opacity="0.32"/><ellipse cx="173.0" cy="148.0" rx="0.95" ry="8.0" fill="#8a2cb0" opacity="0.2"/><ellipse cx="78.3" cy="175.5" rx="1.2" ry="24.5" fill="#8a2cb0" opacity="0.32"/><ellipse cx="56.5" cy="182.0" rx="0.95" ry="21.0" fill="#8a2cb0" opacity="0.2"/><ellipse cx="234.5" cy="187.5" rx="1.2" ry="15.5" fill="#8a2cb0" opacity="0.32"/><ellipse cx="140.0" cy="189.0" rx="0.95" ry="14.0" fill="#8a2cb0" opacity="0.2"/><ellipse cx="72.0" cy="137.5" rx="0.95" ry="6.5" fill="#8a2cb0" opacity="0.2"/><ellipse cx="258.0" cy="119.0" rx="0.95" ry="11.0" fill="#8a2cb0" opacity="0.11"/><ellipse cx="243.0" cy="271.5" rx="0.95" ry="12.5" fill="#8a2cb0" opacity="0.2"/><ellipse cx="109.0" cy="219.5" rx="0.95" ry="4.5" fill="#8a2cb0" opacity="0.2"/><ellipse cx="286.5" cy="210.0" rx="0.95" ry="7.0" fill="#8a2cb0" opacity="0.2"/><ellipse cx="53.0" cy="224.5" rx="0.95" ry="10.5" fill="#8a2cb0" opacity="0.2"/><ellipse cx="214.5" cy="182.5" rx="0.95" ry="10.5" fill="#8a2cb0" opacity="0.11"/><ellipse cx="230.0" cy="226.0" rx="0.95" ry="9.0" fill="#8a2cb0" opacity="0.2"/><ellipse cx="186.4" cy="311.0" rx="1.5" ry="25.0" fill="#8a2cb0" opacity="0.85"/><ellipse cx="186.4" cy="383.0" rx="1.5" ry="42.0" fill="#8a2cb0" opacity="0.6"/><ellipse cx="186.6" cy="385.0" rx="1.5" ry="13.0" fill="#8a2cb0" opacity="0.85"/><ellipse cx="173.0" cy="363.5" rx="1.2" ry="15.5" fill="#8a2cb0" opacity="0.45"/><ellipse cx="214.5" cy="353.0" rx="1.2" ry="16.0" fill="#8a2cb0" opacity="0.45"/><ellipse cx="242.0" cy="358.0" rx="1.2" ry="21.0" fill="#8a2cb0" opacity="0.32"/><ellipse cx="56.5" cy="354.5" rx="1.2" ry="31.5" fill="#8a2cb0" opacity="0.45"/><ellipse cx="155.5" cy="307.0" rx="0.95" ry="9.0" fill="#8a2cb0" opacity="0.2"/><ellipse cx="88.0" cy="391.5" rx="0.95" ry="8.5" fill="#8a2cb0" opacity="0.2"/><ellipse cx="220.0" cy="389.5" rx="0.95" ry="17.5" fill="#8a2cb0" opacity="0.2"/><ellipse cx="62.0" cy="437.0" rx="1.2" ry="16.0" fill="#8a2cb0" opacity="0.32"/><ellipse cx="56.0" cy="461.0" rx="1.2" ry="15.0" fill="#8a2cb0" opacity="0.45"/><ellipse cx="184.0" cy="453.0" rx="0.95" ry="21.0" fill="#8a2cb0" opacity="0.2"/><ellipse cx="190.0" cy="466.0" rx="1.2" ry="10.0" fill="#8a2cb0" opacity="0.45"/><ellipse cx="234.5" cy="462.5" rx="1.2" ry="13.5" fill="#8a2cb0" opacity="0.45"/><ellipse cx="172.4" cy="468.0" rx="0.95" ry="8.0" fill="#8a2cb0" opacity="0.2"/><ellipse cx="146.0" cy="469.5" rx="0.95" ry="6.5" fill="#8a2cb0" opacity="0.2"/><ellipse cx="72.0" cy="469.5" rx="0.95" ry="6.5" fill="#8a2cb0" opacity="0.2"/><ellipse cx="223.0" cy="469.5" rx="0.95" ry="6.5" fill="#8a2cb0" opacity="0.2"/><ellipse cx="158.0" cy="398.5" rx="0.95" ry="8.5" fill="#8a2cb0" opacity="0.11"/><ellipse cx="109.0" cy="376.0" rx="0.95" ry="7.0" fill="#8a2cb0" opacity="0.11"/><ellipse cx="79.0" cy="377.5" rx="0.95" ry="5.5" fill="#8a2cb0" opacity="0.11"/><ellipse cx="248.0" cy="361.5" rx="0.95" ry="10.5" fill="#8a2cb0" opacity="0.2"/><ellipse cx="197.0" cy="435.0" rx="0.95" ry="7.0" fill="#8a2cb0" opacity="0.2"/><ellipse cx="278.0" cy="423.0" rx="0.95" ry="5.0" fill="#8a2cb0" opacity="0.11"/><ellipse cx="313.0" cy="128.0" rx="0.95" ry="9.0" fill="#8a2cb0" opacity="0.11"/><ellipse cx="365.0" cy="142.0" rx="0.95" ry="12.0" fill="#8a2cb0" opacity="0.11"/><ellipse cx="449.4" cy="156.0" rx="0.95" ry="9.0" fill="#8a2cb0" opacity="0.2"/><ellipse cx="439.0" cy="147.0" rx="0.95" ry="7.0" fill="#8a2cb0" opacity="0.11"/><ellipse cx="438.0" cy="191.0" rx="0.95" ry="9.0" fill="#8a2cb0" opacity="0.11"/><ellipse cx="412.0" cy="236.5" rx="0.95" ry="8.5" fill="#8a2cb0" opacity="0.2"/><ellipse cx="350.4" cy="212.0" rx="0.95" ry="9.0" fill="#8a2cb0" opacity="0.11"/><ellipse cx="371.5" cy="250.5" rx="0.95" ry="12.5" fill="#8a2cb0" opacity="0.11"/><ellipse cx="366.0" cy="280.0" rx="0.95" ry="10.0" fill="#8a2cb0" opacity="0.2"/><ellipse cx="520.7" cy="203.5" rx="0.95" ry="10.5" fill="#8a2cb0" opacity="0.11"/><ellipse cx="517.0" cy="259.0" rx="0.95" ry="7.0" fill="#8a2cb0" opacity="0.11"/><ellipse cx="540.0" cy="192.5" rx="0.95" ry="10.5" fill="#8a2cb0" opacity="0.11"/><ellipse cx="301.0" cy="379.0" rx="1.2" ry="21.0" fill="#8a2cb0" opacity="0.32"/><ellipse cx="327.0" cy="382.5" rx="0.95" ry="10.5" fill="#8a2cb0" opacity="0.2"/><ellipse cx="319.5" cy="414.5" rx="0.95" ry="10.5" fill="#8a2cb0" opacity="0.2"/><ellipse cx="431.0" cy="435.5" rx="0.95" ry="17.5" fill="#8a2cb0" opacity="0.2"/><ellipse cx="428.7" cy="463.5" rx="1.2" ry="10.5" fill="#8a2cb0" opacity="0.32"/><ellipse cx="511.0" cy="435.0" rx="1.2" ry="7.0" fill="#8a2cb0" opacity="0.32"/><ellipse cx="452.0" cy="347.5" rx="0.95" ry="10.5" fill="#8a2cb0" opacity="0.11"/><ellipse cx="390.0" cy="358.0" rx="0.95" ry="7.0" fill="#8a2cb0" opacity="0.11"/><ellipse cx="381.0" cy="374.0" rx="0.95" ry="5.0" fill="#8a2cb0" opacity="0.11"/><ellipse cx="348.7" cy="461.5" rx="0.95" ry="8.5" fill="#8a2cb0" opacity="0.11"/><ellipse cx="401.0" cy="435.5" rx="0.95" ry="10.5" fill="#8a2cb0" opacity="0.11"/><ellipse cx="369.0" cy="291.5" rx="0.95" ry="3.5" fill="#8a2cb0" opacity="0.2"/><ellipse cx="510.0" cy="384.5" rx="0.95" ry="19.5" fill="#8a2cb0" opacity="0.11"/><ellipse cx="540.0" cy="388.0" rx="0.95" ry="16.0" fill="#8a2cb0" opacity="0.11"/><ellipse cx="426.6" cy="395.0" rx="0.95" ry="9.0" fill="#8a2cb0" opacity="0.11"/><ellipse cx="376.8" cy="414.0" rx="0.95" ry="7.0" fill="#8a2cb0" opacity="0.11"/><ellipse cx="517.0" cy="356.5" rx="0.95" ry="8.5" fill="#8a2cb0" opacity="0.11"/><ellipse cx="461.0" cy="374.0" rx="0.95" ry="5.0" fill="#8a2cb0" opacity="0.11"/><ellipse cx="448.0" cy="465.0" rx="0.95" ry="5.0" fill="#8a2cb0" opacity="0.11"/><ellipse cx="689.0" cy="122.5" rx="0.95" ry="8.5" fill="#8a2cb0" opacity="0.2"/><ellipse cx="739.0" cy="168.5" rx="0.95" ry="10.5" fill="#8a2cb0" opacity="0.11"/><ellipse cx="626.0" cy="201.5" rx="0.95" ry="8.5" fill="#8a2cb0" opacity="0.11"/><ellipse cx="623.0" cy="245.5" rx="0.95" ry="10.5" fill="#8a2cb0" opacity="0.2"/><ellipse cx="751.4" cy="254.0" rx="0.95" ry="9.0" fill="#8a2cb0" opacity="0.11"/><ellipse cx="554.8" cy="205.0" rx="0.95" ry="5.0" fill="#8a2cb0" opacity="0.11"/><ellipse cx="693.5" cy="205.0" rx="0.95" ry="5.0" fill="#8a2cb0" opacity="0.11"/><ellipse cx="743.7" cy="279.5" rx="0.95" ry="6.5" fill="#8a2cb0" opacity="0.11"/><ellipse cx="749.6" cy="169.0" rx="0.95" ry="4.0" fill="#8a2cb0" opacity="0.11"/><ellipse cx="582.0" cy="351.5" rx="0.95" ry="17.5" fill="#8a2cb0" opacity="0.2"/><ellipse cx="633.0" cy="337.5" rx="0.95" ry="10.5" fill="#8a2cb0" opacity="0.2"/><ellipse cx="648.0" cy="410.5" rx="1.2" ry="17.5" fill="#8a2cb0" opacity="0.32"/><ellipse cx="649.5" cy="408.0" rx="0.95" ry="12.0" fill="#8a2cb0" opacity="0.2"/><ellipse cx="646.5" cy="412.5" rx="0.95" ry="12.5" fill="#8a2cb0" opacity="0.2"/><ellipse cx="658.0" cy="400.0" rx="0.95" ry="14.0" fill="#8a2cb0" opacity="0.2"/><ellipse cx="697.0" cy="400.5" rx="0.95" ry="10.5" fill="#8a2cb0" opacity="0.2"/><ellipse cx="716.0" cy="375.5" rx="0.95" ry="10.5" fill="#8a2cb0" opacity="0.2"/><ellipse cx="573.4" cy="458.0" rx="1.2" ry="12.0" fill="#8a2cb0" opacity="0.45"/><ellipse cx="584.6" cy="440.5" rx="0.95" ry="12.5" fill="#8a2cb0" opacity="0.2"/><ellipse cx="591.6" cy="451.0" rx="0.95" ry="12.0" fill="#8a2cb0" opacity="0.2"/><ellipse cx="626.0" cy="430.0" rx="0.95" ry="12.0" fill="#8a2cb0" opacity="0.2"/><ellipse cx="668.0" cy="465.0" rx="1.2" ry="9.0" fill="#8a2cb0" opacity="0.32"/><ellipse cx="691.0" cy="463.5" rx="0.95" ry="10.5" fill="#8a2cb0" opacity="0.2"/><ellipse cx="630.0" cy="405.5" rx="0.95" ry="8.5" fill="#8a2cb0" opacity="0.2"/><ellipse cx="763.7" cy="348.0" rx="0.95" ry="7.0" fill="#8a2cb0" opacity="0.11"/><ellipse cx="755.0" cy="393.5" rx="0.95" ry="10.5" fill="#8a2cb0" opacity="0.11"/><ellipse cx="727.0" cy="445.5" rx="0.95" ry="10.5" fill="#8a2cb0" opacity="0.2"/><ellipse cx="786.5" cy="437.0" rx="0.95" ry="9.0" fill="#8a2cb0" opacity="0.11"/><ellipse cx="600.0" cy="296.5" rx="0.95" ry="5.5" fill="#8a2cb0" opacity="0.11"/><ellipse cx="691.0" cy="332.0" rx="0.95" ry="5.0" fill="#8a2cb0" opacity="0.11"/><ellipse cx="728.6" cy="375.5" rx="0.95" ry="10.5" fill="#8a2cb0" opacity="0.11"/><ellipse cx="556.5" cy="398.5" rx="0.95" ry="8.5" fill="#8a2cb0" opacity="0.11"/><ellipse cx="674.0" cy="433.5" rx="0.95" ry="8.5" fill="#8a2cb0" opacity="0.11"/><ellipse cx="746.0" cy="344.0" rx="0.95" ry="7.0" fill="#8a2cb0" opacity="0.11"/><ellipse cx="648.0" cy="461.5" rx="0.95" ry="8.5" fill="#8a2cb0" opacity="0.2"/><ellipse cx="784.8" cy="469.5" rx="0.95" ry="6.5" fill="#8a2cb0" opacity="0.2"/><ellipse cx="616.0" cy="351.5" rx="0.95" ry="3.5" fill="#8a2cb0" opacity="0.11"/><ellipse cx="704.0" cy="349.5" rx="0.95" ry="8.5" fill="#8a2cb0" opacity="0.11"/><ellipse cx="788.0" cy="305.0" rx="0.95" ry="7.0" fill="#8a2cb0" opacity="0.11"/><ellipse cx="957.0" cy="143.5" rx="1.2" ry="10.5" fill="#8a2cb0" opacity="0.32"/><ellipse cx="967.7" cy="173.5" rx="1.2" ry="12.5" fill="#8a2cb0" opacity="0.45"/><ellipse cx="940.0" cy="156.0" rx="0.95" ry="12.0" fill="#8a2cb0" opacity="0.2"/><ellipse cx="946.0" cy="175.0" rx="0.95" ry="7.0" fill="#8a2cb0" opacity="0.2"/><ellipse cx="883.7" cy="214.0" rx="0.95" ry="14.0" fill="#8a2cb0" opacity="0.2"/><ellipse cx="854.5" cy="219.3" rx="0.95" ry="19.3" fill="#8a2cb0" opacity="0.2"/><ellipse cx="851.0" cy="238.5" rx="0.95" ry="7.5" fill="#8a2cb0" opacity="0.2"/><ellipse cx="833.5" cy="222.8" rx="0.95" ry="8.8" fill="#8a2cb0" opacity="0.11"/><ellipse cx="804.0" cy="265.0" rx="0.95" ry="9.0" fill="#8a2cb0" opacity="0.11"/><ellipse cx="936.4" cy="235.0" rx="0.95" ry="7.0" fill="#8a2cb0" opacity="0.2"/><ellipse cx="902.0" cy="119.0" rx="0.95" ry="7.0" fill="#8a2cb0" opacity="0.11"/><ellipse cx="917.0" cy="280.0" rx="0.95" ry="6.0" fill="#8a2cb0" opacity="0.2"/><ellipse cx="945.0" cy="280.8" rx="0.95" ry="5.2" fill="#8a2cb0" opacity="0.2"/><ellipse cx="896.7" cy="222.8" rx="0.95" ry="8.8" fill="#8a2cb0" opacity="0.11"/><ellipse cx="918.5" cy="224.6" rx="0.95" ry="7.0" fill="#8a2cb0" opacity="0.11"/><ellipse cx="977.6" cy="178.5" rx="0.95" ry="10.5" fill="#8a2cb0" opacity="0.11"/><ellipse cx="822.0" cy="312.5" rx="0.95" ry="10.5" fill="#8a2cb0" opacity="0.2"/><ellipse cx="916.8" cy="312.5" rx="1.2" ry="24.5" fill="#8a2cb0" opacity="0.32"/><ellipse cx="926.0" cy="319.6" rx="0.95" ry="14.0" fill="#8a2cb0" opacity="0.2"/><ellipse cx="936.4" cy="346.0" rx="0.95" ry="23.0" fill="#8a2cb0" opacity="0.2"/><ellipse cx="906.6" cy="316.0" rx="0.95" ry="7.0" fill="#8a2cb0" opacity="0.2"/><ellipse cx="967.0" cy="309.1" rx="0.95" ry="10.6" fill="#8a2cb0" opacity="0.2"/><ellipse cx="949.4" cy="402.3" rx="0.95" ry="26.3" fill="#8a2cb0" opacity="0.2"/><ellipse cx="814.0" cy="439.1" rx="1.2" ry="10.5" fill="#8a2cb0" opacity="0.32"/><ellipse cx="825.7" cy="464.5" rx="1.2" ry="11.5" fill="#8a2cb0" opacity="0.45"/><ellipse cx="800.0" cy="365.0" rx="0.95" ry="14.0" fill="#8a2cb0" opacity="0.11"/><ellipse cx="793.7" cy="466.4" rx="0.95" ry="9.7" fill="#8a2cb0" opacity="0.2"/><ellipse cx="861.0" cy="430.3" rx="0.95" ry="8.7" fill="#8a2cb0" opacity="0.11"/><ellipse cx="924.8" cy="453.2" rx="0.95" ry="10.5" fill="#8a2cb0" opacity="0.11"/><ellipse cx="855.0" cy="464.5" rx="0.95" ry="11.5" fill="#8a2cb0" opacity="0.11"/><ellipse cx="977.6" cy="326.6" rx="0.95" ry="14.0" fill="#8a2cb0" opacity="0.11"/><ellipse cx="905.5" cy="356.4" rx="0.95" ry="8.7" fill="#8a2cb0" opacity="0.11"/><ellipse cx="828.0" cy="360.0" rx="0.95" ry="9.0" fill="#8a2cb0" opacity="0.11"/><ellipse cx="839.4" cy="326.6" rx="0.95" ry="7.0" fill="#8a2cb0" opacity="0.11"/><ellipse cx="940.6" cy="425.1" rx="0.95" ry="10.6" fill="#8a2cb0" opacity="0.11"/><ellipse cx="958.0" cy="390.0" rx="0.95" ry="7.0" fill="#8a2cb0" opacity="0.11"/></g><g fill="none" stroke-linecap="round"><path d="M474.6 113 C473.6 135 469.6 160 468 188 C466.6 212 464.8 240 465.2 262 C465.4 275 466.0 284 466.6 296" stroke="url(#gb)" stroke-width="2.6" filter="url(#fg)"/><path d="M478.9 143 V163" stroke="#5a1a90" stroke-width="1.6" opacity=".8" filter="url(#fd)"/><path d="M486.5 159 V175" stroke="#4a1680" stroke-width="1.6" opacity=".7" filter="url(#fd)"/><path d="M484 214 C485.2 230 485 246 483.8 262" stroke="#5a1c98" stroke-width="3.2" opacity=".85" filter="url(#fc)"/><path d="M484 288 V304" stroke="#4a1680" stroke-width="1.6" opacity=".7" filter="url(#fd)"/></g><path d="M476.53 199.00 L475.81 202.15 L475.09 205.31 L474.37 208.46 L473.66 211.62 L473.25 214.77 L472.80 217.92 L472.35 221.08 L471.91 224.23 L471.46 227.38 L471.01 230.54 L470.59 233.69 L470.19 236.85 L469.80 240.00 L469.41 243.15 L469.00 246.31 L468.52 249.46 L468.03 252.62 L467.55 255.77 L467.07 258.92 L466.62 262.08 L466.19 265.23 L465.76 268.38 L465.33 271.54 L464.92 274.69 L464.52 277.85 L464.13 281.00 L463.95 284.15 L463.88 287.31 L463.81 290.46 L463.80 293.62 L463.84 296.77 L463.88 299.92 L464.01 303.08 L464.18 306.23 L464.35 309.38 L464.52 312.54 L464.77 315.69 L465.08 318.85 L465.40 322.00 L467.60 322.00 L468.23 318.85 L468.86 315.69 L469.43 312.54 L469.94 309.38 L470.45 306.23 L470.96 303.08 L471.39 299.92 L471.64 296.77 L471.90 293.62 L472.21 290.46 L472.58 287.31 L472.95 284.15 L473.35 281.00 L473.84 277.85 L474.32 274.69 L474.81 271.54 L475.33 268.38 L475.84 265.23 L476.36 262.08 L476.84 258.92 L477.26 255.77 L477.68 252.62 L478.09 249.46 L478.51 246.31 L478.84 243.15 L479.17 240.00 L479.50 236.85 L479.82 233.69 L480.03 230.54 L480.10 227.38 L480.17 224.23 L480.24 221.08 L480.31 217.92 L480.38 214.77 L480.32 211.62 L479.96 208.46 L479.60 205.31 L479.23 202.15 L478.87 199.00Z" fill="#6a1fa0" opacity=".95" filter="url(#ff)"/><path d="M477.20 199.00 L476.61 202.15 L476.02 205.31 L475.43 208.46 L474.84 211.62 L474.46 214.77 L474.03 217.92 L473.60 221.08 L473.17 224.23 L472.73 227.38 L472.30 230.54 L471.89 233.69 L471.49 236.85 L471.10 240.00 L470.71 243.15 L470.30 246.31 L469.82 249.46 L469.33 252.62 L468.85 255.77 L468.37 258.92 L467.92 262.08 L467.49 265.23 L467.06 268.38 L466.63 271.54 L466.22 274.69 L465.82 277.85 L465.43 281.00 L465.23 284.15 L465.12 287.31 L465.02 290.46 L464.97 293.62 L464.99 296.77 L465.00 299.92 L465.08 303.08 L465.20 306.23 L465.32 309.38 L465.44 312.54 L465.65 315.69 L465.92 318.85 L466.20 322.00 L466.80 322.00 L467.39 318.85 L467.98 315.69 L468.51 312.54 L468.97 309.38 L469.43 306.23 L469.89 303.08 L470.28 299.92 L470.50 296.77 L470.72 293.62 L471.00 290.46 L471.33 287.31 L471.67 284.15 L472.05 281.00 L472.54 277.85 L473.02 274.69 L473.51 271.54 L474.03 268.38 L474.54 265.23 L475.06 262.08 L475.54 258.92 L475.96 255.77 L476.38 252.62 L476.79 249.46 L477.21 246.31 L477.54 243.15 L477.87 240.00 L478.20 236.85 L478.52 233.69 L478.74 230.54 L478.83 227.38 L478.91 224.23 L479.00 221.08 L479.09 217.92 L479.17 214.77 L479.14 211.62 L478.91 208.46 L478.67 205.31 L478.44 202.15 L478.20 199.00Z" fill="url(#ga)" filter="url(#fe)"/><path d="M471.60 260.00 L471.27 261.33 L470.93 262.67 L470.60 264.00 L470.27 265.33 L469.93 266.67 L469.60 268.00 L469.27 269.33 L468.93 270.67 L468.60 272.00 L468.31 273.33 L468.03 274.67 L467.74 276.00 L467.45 277.33 L467.17 278.67 L466.88 280.00 L466.59 281.33 L466.35 282.67 L466.16 284.00 L466.08 285.33 L466.00 286.67 L465.91 288.00 L465.83 289.33 L465.75 290.67 L465.67 292.00 L465.63 293.33 L465.60 294.67 L465.57 296.00 L465.66 297.33 L465.74 298.67 L465.83 300.00 L465.92 301.33 L465.98 302.67 L466.04 304.00 L466.11 305.33 L466.23 306.67 L466.35 308.00 L466.46 309.33 L466.58 310.67 L466.70 312.00 L467.30 312.00 L467.56 310.67 L467.83 309.33 L468.09 308.00 L468.35 306.67 L468.62 305.33 L468.84 304.00 L469.04 302.67 L469.25 301.33 L469.43 300.00 L469.61 298.67 L469.79 297.33 L469.97 296.00 L470.02 294.67 L470.08 293.33 L470.13 292.00 L470.24 290.67 L470.34 289.33 L470.45 288.00 L470.55 286.67 L470.66 285.33 L470.76 284.00 L470.75 282.67 L470.79 281.33 L470.88 280.00 L470.97 278.67 L471.05 277.33 L471.14 276.00 L471.23 274.67 L471.31 273.33 L471.40 272.00 L471.47 270.67 L471.53 269.33 L471.60 268.00 L471.67 266.67 L471.73 265.33 L471.80 264.00 L471.87 262.67 L471.93 261.33 L472.00 260.00Z" fill="#ff1430" filter="url(#fe)"/></svg>
<span style="left:30.00px;top:110.92px;font-size:6.3px;line-height:7.56px;color:#333;">8.80</span>
<div style="left:43.30px;top:113.05px;width:3.00px;height:0.70px;background:#444;"></div>
<span style="left:30.00px;top:124.62px;font-size:6.3px;line-height:7.56px;color:#333;">8.60</span>
<div style="left:43.30px;top:126.76px;width:3.00px;height:0.70px;background:#444;"></div>
<span style="left:30.00px;top:138.33px;font-size:6.3px;line-height:7.56px;color:#333;">8.40</span>
<div style="left:43.30px;top:140.46px;width:3.00px;height:0.70px;background:#444;"></div>
<span style="left:30.00px;top:152.04px;font-size:6.3px;line-height:7.56px;color:#333;">8.20</span>
<div style="left:43.30px;top:154.17px;width:3.00px;height:0.70px;background:#444;"></div>
<span style="left:30.00px;top:165.74px;font-size:6.3px;line-height:7.56px;color:#333;">8.00</span>
<div style="left:43.30px;top:167.87px;width:3.00px;height:0.70px;background:#444;"></div>
<span style="left:30.00px;top:179.45px;font-size:6.3px;line-height:7.56px;color:#333;">7.80</span>
<div style="left:43.30px;top:181.58px;width:3.00px;height:0.70px;background:#444;"></div>
<span style="left:30.00px;top:193.15px;font-size:6.3px;line-height:7.56px;color:#333;">7.60</span>
<div style="left:43.30px;top:195.28px;width:3.00px;height:0.70px;background:#444;"></div>
<span style="left:30.00px;top:206.86px;font-size:6.3px;line-height:7.56px;color:#333;">7.40</span>
<div style="left:43.30px;top:208.99px;width:3.00px;height:0.70px;background:#444;"></div>
<span style="left:30.00px;top:220.56px;font-size:6.3px;line-height:7.56px;color:#333;">7.20</span>
<div style="left:43.30px;top:222.69px;width:3.00px;height:0.70px;background:#444;"></div>
<span style="left:30.00px;top:234.27px;font-size:6.3px;line-height:7.56px;color:#333;">7.00</span>
<div style="left:43.30px;top:236.40px;width:3.00px;height:0.70px;background:#444;"></div>
<span style="left:30.00px;top:247.97px;font-size:6.3px;line-height:7.56px;color:#333;">6.80</span>
<div style="left:43.30px;top:250.10px;width:3.00px;height:0.70px;background:#444;"></div>
<span style="left:30.00px;top:261.68px;font-size:6.3px;line-height:7.56px;color:#333;">6.60</span>
<div style="left:43.30px;top:263.80px;width:3.00px;height:0.70px;background:#444;"></div>
<span style="left:30.00px;top:275.38px;font-size:6.3px;line-height:7.56px;color:#333;">6.40</span>
<div style="left:43.30px;top:277.51px;width:3.00px;height:0.70px;background:#444;"></div>
<span style="left:30.00px;top:289.09px;font-size:6.3px;line-height:7.56px;color:#333;">6.20</span>
<div style="left:43.30px;top:291.21px;width:3.00px;height:0.70px;background:#444;"></div>
<span style="left:30.00px;top:302.79px;font-size:6.3px;line-height:7.56px;color:#333;">6.00</span>
<div style="left:43.30px;top:304.92px;width:3.00px;height:0.70px;background:#444;"></div>
<span style="left:30.00px;top:316.50px;font-size:6.3px;line-height:7.56px;color:#333;">5.80</span>
<div style="left:43.30px;top:318.62px;width:3.00px;height:0.70px;background:#444;"></div>
<span style="left:30.00px;top:330.20px;font-size:6.3px;line-height:7.56px;color:#333;">5.60</span>
<div style="left:43.30px;top:332.33px;width:3.00px;height:0.70px;background:#444;"></div>
<span style="left:30.00px;top:343.91px;font-size:6.3px;line-height:7.56px;color:#333;">5.40</span>
<div style="left:43.30px;top:346.03px;width:3.00px;height:0.70px;background:#444;"></div>
<span style="left:30.00px;top:357.61px;font-size:6.3px;line-height:7.56px;color:#333;">5.20</span>
<div style="left:43.30px;top:359.74px;width:3.00px;height:0.70px;background:#444;"></div>
<span style="left:30.00px;top:371.31px;font-size:6.3px;line-height:7.56px;color:#333;">5.00</span>
<div style="left:43.30px;top:373.44px;width:3.00px;height:0.70px;background:#444;"></div>
<span style="left:30.00px;top:385.02px;font-size:6.3px;line-height:7.56px;color:#333;">4.80</span>
<div style="left:43.30px;top:387.15px;width:3.00px;height:0.70px;background:#444;"></div>
<span style="left:30.00px;top:398.73px;font-size:6.3px;line-height:7.56px;color:#333;">4.60</span>
<div style="left:43.30px;top:400.86px;width:3.00px;height:0.70px;background:#444;"></div>
<span style="left:30.00px;top:412.43px;font-size:6.3px;line-height:7.56px;color:#333;">4.40</span>
<div style="left:43.30px;top:414.56px;width:3.00px;height:0.70px;background:#444;"></div>
<span style="left:30.00px;top:426.14px;font-size:6.3px;line-height:7.56px;color:#333;">4.20</span>
<div style="left:43.30px;top:428.26px;width:3.00px;height:0.70px;background:#444;"></div>
<span style="left:30.00px;top:439.84px;font-size:6.3px;line-height:7.56px;color:#333;">4.00</span>
<div style="left:43.30px;top:441.97px;width:3.00px;height:0.70px;background:#444;"></div>
<span style="left:30.00px;top:453.55px;font-size:6.3px;line-height:7.56px;color:#333;">3.80</span>
<div style="left:43.30px;top:455.67px;width:3.00px;height:0.70px;background:#444;"></div>
<span style="left:29.60px;top:470.02px;font-size:6.3px;line-height:7.56px;color:#4a4ab8;">3.50</span>
<div style="left:43.30px;top:469.15px;width:3.00px;height:0.70px;background:#444;"></div>
<span style="left:19.80px;top:476.92px;font-size:6.3px;line-height:7.56px;color:#333;">kHz</span>
<span style="left:43.20px;top:480.72px;font-size:6.3px;line-height:7.56px;color:#333;">s</span>
<span style="left:47.40px;top:481.12px;font-size:6.3px;line-height:7.56px;color:#4a4ab8;">1.5</span>
<span style="left:78.28px;top:479.82px;width:30px;text-align:center;font-size:6.3px;line-height:7.56px;color:#3c3c3c">1.55</span>
<span style="left:125.11px;top:479.82px;width:30px;text-align:center;font-size:6.3px;line-height:7.56px;color:#3c3c3c">1.6</span>
<span style="left:171.94px;top:479.82px;width:30px;text-align:center;font-size:6.3px;line-height:7.56px;color:#3c3c3c">1.65</span>
<span style="left:218.77px;top:479.82px;width:30px;text-align:center;font-size:6.3px;line-height:7.56px;color:#3c3c3c">1.7</span>
<span style="left:265.60px;top:479.82px;width:30px;text-align:center;font-size:6.3px;line-height:7.56px;color:#3c3c3c">1.75</span>
<span style="left:312.43px;top:479.82px;width:30px;text-align:center;font-size:6.3px;line-height:7.56px;color:#3c3c3c">1.8</span>
<span style="left:359.26px;top:479.82px;width:30px;text-align:center;font-size:6.3px;line-height:7.56px;color:#3c3c3c">1.85</span>
<span style="left:406.09px;top:479.82px;width:30px;text-align:center;font-size:6.3px;line-height:7.56px;color:#3c3c3c">1.9</span>
<span style="left:452.92px;top:479.82px;width:30px;text-align:center;font-size:6.3px;line-height:7.56px;color:#3c3c3c">1.95</span>
<span style="left:499.75px;top:479.82px;width:30px;text-align:center;font-size:6.3px;line-height:7.56px;color:#3c3c3c">2</span>
<span style="left:546.58px;top:479.82px;width:30px;text-align:center;font-size:6.3px;line-height:7.56px;color:#3c3c3c">2.05</span>
<span style="left:593.41px;top:479.82px;width:30px;text-align:center;font-size:6.3px;line-height:7.56px;color:#3c3c3c">2.1</span>
<span style="left:640.24px;top:479.82px;width:30px;text-align:center;font-size:6.3px;line-height:7.56px;color:#3c3c3c">2.15</span>
<span style="left:687.07px;top:479.82px;width:30px;text-align:center;font-size:6.3px;line-height:7.56px;color:#3c3c3c">2.2</span>
<span style="left:733.90px;top:479.82px;width:30px;text-align:center;font-size:6.3px;line-height:7.56px;color:#3c3c3c">2.25</span>
<span style="left:780.73px;top:479.82px;width:30px;text-align:center;font-size:6.3px;line-height:7.56px;color:#3c3c3c">2.3</span>
<span style="left:827.56px;top:479.82px;width:30px;text-align:center;font-size:6.3px;line-height:7.56px;color:#3c3c3c">2.35</span>
<span style="left:874.39px;top:479.82px;width:30px;text-align:center;font-size:6.3px;line-height:7.56px;color:#3c3c3c">2.4</span>
<span style="left:921.22px;top:479.82px;width:30px;text-align:center;font-size:6.3px;line-height:7.56px;color:#3c3c3c">2.45</span>
<div style="left:45.30px;top:98.40px;width:1.70px;height:378.40px;background:linear-gradient(90deg,#fff 0%,#ecd6ee 28%,#5a2a6c 55%,#1a0820 80%,#000 100%);"></div>
<div style="left:45.60px;top:475.20px;width:937.60px;height:2.40px;background:linear-gradient(#000 0%,#3a1244 35%,#b98abf 62%,#f1dff2 82%,#fff 100%);"></div>
<svg style="left:0;top:476.3px;width:1000px;height:3.2px" viewBox="0 0 1000 3.2" preserveAspectRatio="none"><g fill="#5e3470" opacity=".8"><rect x="46.05" y="0" width="0.8" height="2.9"/><rect x="55.42" y="0" width="0.8" height="1.8"/><rect x="64.78" y="0" width="0.8" height="1.8"/><rect x="74.15" y="0" width="0.8" height="1.8"/><rect x="83.51" y="0" width="0.8" height="1.8"/><rect x="92.88" y="0" width="0.8" height="2.9"/><rect x="102.25" y="0" width="0.8" height="1.8"/><rect x="111.61" y="0" width="0.8" height="1.8"/><rect x="120.98" y="0" width="0.8" height="1.8"/><rect x="130.34" y="0" width="0.8" height="1.8"/><rect x="139.71" y="0" width="0.8" height="2.9"/><rect x="149.08" y="0" width="0.8" height="1.8"/><rect x="158.44" y="0" width="0.8" height="1.8"/><rect x="167.81" y="0" width="0.8" height="1.8"/><rect x="177.17" y="0" width="0.8" height="1.8"/><rect x="186.54" y="0" width="0.8" height="2.9"/><rect x="195.91" y="0" width="0.8" height="1.8"/><rect x="205.27" y="0" width="0.8" height="1.8"/><rect x="214.64" y="0" width="0.8" height="1.8"/><rect x="224.00" y="0" width="0.8" height="1.8"/><rect x="233.37" y="0" width="0.8" height="2.9"/><rect x="242.74" y="0" width="0.8" height="1.8"/><rect x="252.10" y="0" width="0.8" height="1.8"/><rect x="261.47" y="0" width="0.8" height="1.8"/><rect x="270.83" y="0" width="0.8" height="1.8"/><rect x="280.20" y="0" width="0.8" height="2.9"/><rect x="289.57" y="0" width="0.8" height="1.8"/><rect x="298.93" y="0" width="0.8" height="1.8"/><rect x="308.30" y="0" width="0.8" height="1.8"/><rect x="317.66" y="0" width="0.8" height="1.8"/><rect x="327.03" y="0" width="0.8" height="2.9"/><rect x="336.40" y="0" width="0.8" height="1.8"/><rect x="345.76" y="0" width="0.8" height="1.8"/><rect x="355.13" y="0" width="0.8" height="1.8"/><rect x="364.49" y="0" width="0.8" height="1.8"/><rect x="373.86" y="0" width="0.8" height="2.9"/><rect x="383.23" y="0" width="0.8" height="1.8"/><rect x="392.59" y="0" width="0.8" height="1.8"/><rect x="401.96" y="0" width="0.8" height="1.8"/><rect x="411.32" y="0" width="0.8" height="1.8"/><rect x="420.69" y="0" width="0.8" height="2.9"/><rect x="430.06" y="0" width="0.8" height="1.8"/><rect x="439.42" y="0" width="0.8" height="1.8"/><rect x="448.79" y="0" width="0.8" height="1.8"/><rect x="458.15" y="0" width="0.8" height="1.8"/><rect x="467.52" y="0" width="0.8" height="2.9"/><rect x="476.89" y="0" width="0.8" height="1.8"/><rect x="486.25" y="0" width="0.8" height="1.8"/><rect x="495.62" y="0" width="0.8" height="1.8"/><rect x="504.98" y="0" width="0.8" height="1.8"/><rect x="514.35" y="0" width="0.8" height="2.9"/><rect x="523.72" y="0" width="0.8" height="1.8"/><rect x="533.08" y="0" width="0.8" height="1.8"/><rect x="542.45" y="0" width="0.8" height="1.8"/><rect x="551.81" y="0" width="0.8" height="1.8"/><rect x="561.18" y="0" width="0.8" height="2.9"/><rect x="570.55" y="0" width="0.8" height="1.8"/><rect x="579.91" y="0" width="0.8" height="1.8"/><rect x="589.28" y="0" width="0.8" height="1.8"/><rect x="598.64" y="0" width="0.8" height="1.8"/><rect x="608.01" y="0" width="0.8" height="2.9"/><rect x="617.38" y="0" width="0.8" height="1.8"/><rect x="626.74" y="0" width="0.8" height="1.8"/><rect x="636.11" y="0" width="0.8" height="1.8"/><rect x="645.47" y="0" width="0.8" height="1.8"/><rect x="654.84" y="0" width="0.8" height="2.9"/><rect x="664.21" y="0" width="0.8" height="1.8"/><rect x="673.57" y="0" width="0.8" height="1.8"/><rect x="682.94" y="0" width="0.8" height="1.8"/><rect x="692.30" y="0" width="0.8" height="1.8"/><rect x="701.67" y="0" width="0.8" height="2.9"/><rect x="711.04" y="0" width="0.8" height="1.8"/><rect x="720.40" y="0" width="0.8" height="1.8"/><rect x="729.77" y="0" width="0.8" height="1.8"/><rect x="739.13" y="0" width="0.8" height="1.8"/><rect x="748.50" y="0" width="0.8" height="2.9"/><rect x="757.87" y="0" width="0.8" height="1.8"/><rect x="767.23" y="0" width="0.8" height="1.8"/><rect x="776.60" y="0" width="0.8" height="1.8"/><rect x="785.96" y="0" width="0.8" height="1.8"/><rect x="795.33" y="0" width="0.8" height="2.9"/><rect x="804.70" y="0" width="0.8" height="1.8"/><rect x="814.06" y="0" width="0.8" height="1.8"/><rect x="823.43" y="0" width="0.8" height="1.8"/><rect x="832.79" y="0" width="0.8" height="1.8"/><rect x="842.16" y="0" width="0.8" height="2.9"/><rect x="851.53" y="0" width="0.8" height="1.8"/><rect x="860.89" y="0" width="0.8" height="1.8"/><rect x="870.26" y="0" width="0.8" height="1.8"/><rect x="879.62" y="0" width="0.8" height="1.8"/><rect x="888.99" y="0" width="0.8" height="2.9"/><rect x="898.36" y="0" width="0.8" height="1.8"/><rect x="907.72" y="0" width="0.8" height="1.8"/><rect x="917.09" y="0" width="0.8" height="1.8"/><rect x="926.45" y="0" width="0.8" height="1.8"/><rect x="935.82" y="0" width="0.8" height="2.9"/><rect x="945.19" y="0" width="0.8" height="1.8"/><rect x="954.55" y="0" width="0.8" height="1.8"/><rect x="963.92" y="0" width="0.8" height="1.8"/><rect x="973.28" y="0" width="0.8" height="1.8"/><rect x="982.65" y="0" width="0.8" height="2.9"/></g></svg>
<svg style="left:44.7px;top:0;width:1.2px;height:541px" viewBox="0 0 1.2 541" preserveAspectRatio="none"><g fill="#9a70a8" opacity=".55"><rect x="0" y="102.82" width="1.1" height="0.6"/><rect x="0" y="106.25" width="1.1" height="0.6"/><rect x="0" y="109.67" width="1.1" height="0.6"/><rect x="0" y="116.53" width="1.1" height="0.6"/><rect x="0" y="119.95" width="1.1" height="0.6"/><rect x="0" y="123.38" width="1.1" height="0.6"/><rect x="0" y="130.23" width="1.1" height="0.6"/><rect x="0" y="133.66" width="1.1" height="0.6"/><rect x="0" y="137.08" width="1.1" height="0.6"/><rect x="0" y="143.94" width="1.1" height="0.6"/><rect x="0" y="147.36" width="1.1" height="0.6"/><rect x="0" y="150.79" width="1.1" height="0.6"/><rect x="0" y="157.64" width="1.1" height="0.6"/><rect x="0" y="161.07" width="1.1" height="0.6"/><rect x="0" y="164.49" width="1.1" height="0.6"/><rect x="0" y="171.35" width="1.1" height="0.6"/><rect x="0" y="174.77" width="1.1" height="0.6"/><rect x="0" y="178.20" width="1.1" height="0.6"/><rect x="0" y="185.05" width="1.1" height="0.6"/><rect x="0" y="188.48" width="1.1" height="0.6"/><rect x="0" y="191.90" width="1.1" height="0.6"/><rect x="0" y="198.76" width="1.1" height="0.6"/><rect x="0" y="202.18" width="1.1" height="0.6"/><rect x="0" y="205.61" width="1.1" height="0.6"/><rect x="0" y="212.46" width="1.1" height="0.6"/><rect x="0" y="215.89" width="1.1" height="0.6"/><rect x="0" y="219.31" width="1.1" height="0.6"/><rect x="0" y="226.17" width="1.1" height="0.6"/><rect x="0" y="229.59" width="1.1" height="0.6"/><rect x="0" y="233.02" width="1.1" height="0.6"/><rect x="0" y="239.87" width="1.1" height="0.6"/><rect x="0" y="243.30" width="1.1" height="0.6"/><rect x="0" y="246.72" width="1.1" height="0.6"/><rect x="0" y="253.58" width="1.1" height="0.6"/><rect x="0" y="257.00" width="1.1" height="0.6"/><rect x="0" y="260.43" width="1.1" height="0.6"/><rect x="0" y="267.28" width="1.1" height="0.6"/><rect x="0" y="270.71" width="1.1" height="0.6"/><rect x="0" y="274.13" width="1.1" height="0.6"/><rect x="0" y="280.99" width="1.1" height="0.6"/><rect x="0" y="284.41" width="1.1" height="0.6"/><rect x="0" y="287.84" width="1.1" height="0.6"/><rect x="0" y="294.69" width="1.1" height="0.6"/><rect x="0" y="298.12" width="1.1" height="0.6"/><rect x="0" y="301.54" width="1.1" height="0.6"/><rect x="0" y="308.40" width="1.1" height="0.6"/><rect x="0" y="311.82" width="1.1" height="0.6"/><rect x="0" y="315.25" width="1.1" height="0.6"/><rect x="0" y="322.10" width="1.1" height="0.6"/><rect x="0" y="325.53" width="1.1" height="0.6"/><rect x="0" y="328.95" width="1.1" height="0.6"/><rect x="0" y="335.81" width="1.1" height="0.6"/><rect x="0" y="339.23" width="1.1" height="0.6"/><rect x="0" y="342.66" width="1.1" height="0.6"/><rect x="0" y="349.51" width="1.1" height="0.6"/><rect x="0" y="352.94" width="1.1" height="0.6"/><rect x="0" y="356.36" width="1.1" height="0.6"/><rect x="0" y="363.22" width="1.1" height="0.6"/><rect x="0" y="366.64" width="1.1" height="0.6"/><rect x="0" y="370.07" width="1.1" height="0.6"/><rect x="0" y="376.92" width="1.1" height="0.6"/><rect x="0" y="380.35" width="1.1" height="0.6"/><rect x="0" y="383.77" width="1.1" height="0.6"/><rect x="0" y="390.63" width="1.1" height="0.6"/><rect x="0" y="394.05" width="1.1" height="0.6"/><rect x="0" y="397.48" width="1.1" height="0.6"/><rect x="0" y="404.33" width="1.1" height="0.6"/><rect x="0" y="407.76" width="1.1" height="0.6"/><rect x="0" y="411.18" width="1.1" height="0.6"/><rect x="0" y="418.04" width="1.1" height="0.6"/><rect x="0" y="421.46" width="1.1" height="0.6"/><rect x="0" y="424.89" width="1.1" height="0.6"/><rect x="0" y="431.74" width="1.1" height="0.6"/><rect x="0" y="435.17" width="1.1" height="0.6"/><rect x="0" y="438.59" width="1.1" height="0.6"/><rect x="0" y="445.45" width="1.1" height="0.6"/><rect x="0" y="448.87" width="1.1" height="0.6"/><rect x="0" y="452.30" width="1.1" height="0.6"/><rect x="0" y="459.15" width="1.1" height="0.6"/><rect x="0" y="462.58" width="1.1" height="0.6"/><rect x="0" y="466.00" width="1.1" height="0.6"/><rect x="0" y="472.86" width="1.1" height="0.6"/></g></svg>
<div style="left:983.20px;top:98.40px;width:8.80px;height:354.10px;background:#f1f1f1;border:0.6px solid #c6ccd4;"></div>
<div style="left:983.20px;top:98.40px;width:8.80px;height:8.10px;background:#fafafa;border:0.6px solid #c6ccd4;"></div>
<svg style="left:983.2px;top:98.4px;width:8.8px;height:8px" viewBox="0 0 8.8 8"><path d="M2.2 5.3 L4.4 3 L6.6 5.3Z" fill="#222"/></svg>
<div style="left:983.60px;top:335.50px;width:8.20px;height:65.00px;background:#dbe7f4;border:0.7px solid #8faad0;"></div>
<div style="left:986.40px;top:366.30px;width:2.80px;height:3.00px;background:repeating-linear-gradient(#8faad0 0 0.6px,transparent 0.6px 1.2px);"></div>
<div style="left:983.20px;top:445.00px;width:8.80px;height:7.20px;background:#fafafa;border:0.6px solid #c6ccd4;"></div>
<svg style="left:983.2px;top:444.6px;width:8.8px;height:8px" viewBox="0 0 8.8 8"><path d="M2.2 3 L4.4 5.3 L6.6 3Z" fill="#222"/></svg>
<div style="left:983.60px;top:453.30px;width:7.70px;height:7.40px;background:linear-gradient(#e3ecf6,#f9fbfd 50%,#d9e4f1);border:0.55px solid #a3b6cf;"></div>
<div style="left:983.60px;top:462.00px;width:7.70px;height:7.30px;background:linear-gradient(#e3ecf6,#f9fbfd 50%,#d9e4f1);border:0.55px solid #a3b6cf;"></div>
<div style="left:983.60px;top:470.70px;width:7.70px;height:7.30px;background:linear-gradient(#e3ecf6,#f9fbfd 50%,#d9e4f1);border:0.55px solid #a3b6cf;"></div>
<div style="left:983.60px;top:479.50px;width:7.70px;height:7.40px;background:linear-gradient(#e3ecf6,#f9fbfd 50%,#d9e4f1);border:0.55px solid #a3b6cf;"></div>
<svg class="ic" style="left:983.15px;top:452.6px;width:8.6px;height:35px" viewBox="0 0 8.6 35"><rect x="1.9" y="2.2" width="4.8" height="4.6" fill="#fff" stroke="#9a68aa" stroke-width="0.6"/><path d="M1.9 4.5 H6.7" stroke="#d070c8" stroke-width="0.6"/><path d="M2.1 13.1 H6.5 M4.3 10.9 V15.3" stroke="#111" stroke-width="1.05"/><path d="M2.1 21.8 H6.5" stroke="#111" stroke-width="1.05"/><path d="M2.8 28.4 H5.8 M2.8 32.8 H5.8 M4.3 28.4 V32.8" stroke="#111" stroke-width="0.8"/><path d="M3.1 28.6 H5.5 L4.3 30Z M3.1 32.6 H5.5 L4.3 31.2Z" fill="#111"/></svg>
<div style="left:12.50px;top:487.80px;width:979.50px;height:8.60px;background:#eeeeee;"></div>
<div style="left:15.20px;top:488.40px;width:931.80px;height:7.60px;background:#f0f0f0;border:0.6px solid #c2c8d0;"></div>
<div style="left:15.20px;top:488.40px;width:6.20px;height:7.60px;background:#fafafa;border:0.6px solid #c2c8d0;"></div>
<svg style="left:15.2px;top:488.4px;width:6.2px;height:7.6px" viewBox="0 0 6.2 7.6"><path d="M4.2 1.8 L1.9 3.8 L4.2 5.8Z" fill="#222"/></svg>
<div style="left:940.60px;top:488.40px;width:6.40px;height:7.60px;background:#fafafa;border:0.6px solid #c2c8d0;"></div>
<svg style="left:940.7px;top:488.4px;width:6.2px;height:7.6px" viewBox="0 0 6.2 7.6"><path d="M2.2 1.8 L4.5 3.8 L2.2 5.8Z" fill="#222"/></svg>
<div style="left:297.20px;top:488.20px;width:183.60px;height:7.70px;background:linear-gradient(#e4edf8,#d6e4f3);border:0.7px solid #8faad0;"></div>
<div style="left:387.40px;top:490.20px;width:3.00px;height:3.80px;background:repeating-linear-gradient(90deg,#8faad0 0 0.6px,transparent 0.6px 1.2px);"></div>
<div style="left:948.30px;top:488.60px;width:7.50px;height:7.50px;background:linear-gradient(#e3ecf6,#f9fbfd 50%,#d9e4f1);border:0.55px solid #a3b6cf;"></div>
<div style="left:957.10px;top:488.60px;width:7.60px;height:7.50px;background:linear-gradient(#e3ecf6,#f9fbfd 50%,#d9e4f1);border:0.55px solid #a3b6cf;"></div>
<div style="left:965.90px;top:488.60px;width:7.60px;height:7.50px;background:linear-gradient(#e3ecf6,#f9fbfd 50%,#d9e4f1);border:0.55px solid #a3b6cf;"></div>
<div style="left:974.70px;top:488.60px;width:7.60px;height:7.50px;background:linear-gradient(#e3ecf6,#f9fbfd 50%,#d9e4f1);border:0.55px solid #a3b6cf;"></div>
<div style="left:983.60px;top:488.80px;width:7.20px;height:7.20px;background:#e2e2e2;border:0.6px solid #d4d4d4;"></div>
<svg class="ic" style="left:947.9px;top:488.3px;width:35.2px;height:8px" viewBox="0 0 35 8"><rect x="1.9" y="1.7" width="4.6" height="4.8" fill="#fff" stroke="#9a68aa" stroke-width="0.6"/><path d="M4.2 1.7 V6.5" stroke="#d070c8" stroke-width="0.6"/><path d="M10.8 4.1 H15.2 M13 1.9 V6.3" stroke="#111" stroke-width="1.05"/><path d="M19.6 4.1 H24" stroke="#111" stroke-width="1.05"/><path d="M28.4 2.5 V5.7 M32.8 2.5 V5.7 M28.4 4.1 H32.8" stroke="#111" stroke-width="0.8"/><path d="M28.6 2.9 V5.3 L30 4.1Z M32.6 2.9 V5.3 L31.2 4.1Z" fill="#111"/></svg>
<div style="left:12.50px;top:497.20px;width:979.50px;height:4.20px;background:#eeeeee;background-color:#f0f0f0;background-image:linear-gradient(45deg,rgba(0,0,0,0.13) 25%,transparent 25%,transparent 75%,rgba(0,0,0,0.13) 75%),linear-gradient(45deg,rgba(0,0,0,0.13) 25%,transparent 25%,transparent 75%,rgba(0,0,0,0.13) 75%);background-size:2.08px 2.08px;background-position:0 0,1.04px 1.04px;"></div>
<div style="left:12.50px;top:501.20px;width:979.50px;height:0.70px;background:#c8d0da;"></div>
<svg style="left:13.5px;top:496.6px;width:12px;height:5px" viewBox="0 0 12 5"><path d="M0.6 3.6 L2.7 1 L4.8 3.6Z M6 1.2 L8.1 3.8 L10.2 1.2Z" fill="#465a86"/></svg>
<div style="left:12.50px;top:501.90px;width:979.50px;height:11.70px;background:#eeeeee;"></div>
<div style="left:13.20px;top:502.50px;width:33.40px;height:11.10px;background:#a6e3e0;border:0.6px solid #8fa9b4;border-bottom:none;"></div>
<span class=bd0 style="left:20.20px;top:505.12px;font-size:6.3px;line-height:7.56px;color:#333;font-weight:bold;">Table 1</span>
<svg style="left:969px;top:521.9px;width:9.4px;height:10.3px" viewBox="0 0 10 11"><path d="M5.6 1.3 C6.6 1 7.4 1.6 7.5 2.4 L8.2 2.9 L7.5 3.2 C7.9 5 7.6 6.8 6.9 8 L7.8 9.6 L6.6 9.2 L5.4 9.4 L4.6 8.7 L2 9.8 L3.6 7.6 C3.8 5.6 4.4 2.6 5.6 1.3Z" fill="#111"/></svg>
</div></body></html>
